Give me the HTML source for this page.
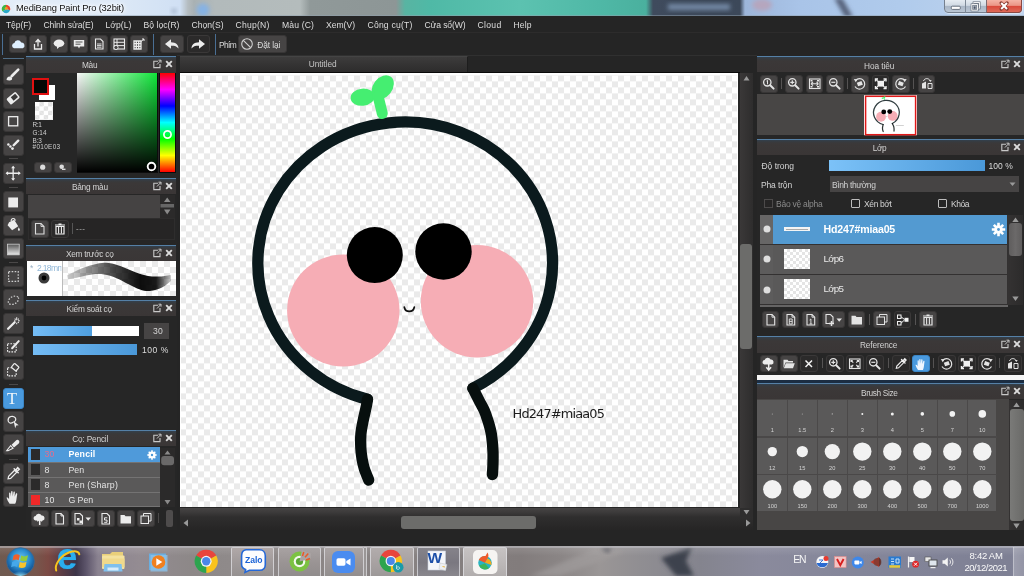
<!DOCTYPE html>
<html lang="vi">
<head>
<meta charset="utf-8">
<title>MediBang Paint Pro (32bit)</title>
<style>
*{box-sizing:border-box;margin:0;padding:0}
html,body{width:1024px;height:576px;overflow:hidden;background:#252525}
body{position:relative;font-family:"Liberation Sans","DejaVu Sans",sans-serif;font-size:8.4px;color:#d8d8d8}
#app{position:absolute;left:-8px;top:-8px;width:1040px;height:592px;overflow:hidden;background:#252525;filter:blur(0.4px)}
#in{position:absolute;left:8px;top:8px;width:1024px;height:576px}
#app div,#app span,#app svg{position:absolute}
.t{white-space:nowrap;line-height:1.2;display:block;opacity:.999}
.b{background:#464444;border:1px solid #383636;border-radius:3px}
.bd{background:#2b2a2a;border:1px solid #3a3838;border-radius:3px}
.ba{background:#4a9ade;border:1px solid #3b86c6;border-radius:3px}
.hd{background:linear-gradient(#33404d 0,#383a3d 2px,#3b3838 4px,#3a3636 100%);border-top:1px solid #5580a6}
.ck{background:repeating-conic-gradient(#eaeaea 0% 25%,#ffffff 0% 50%) 0 0/12px 12px}

</style>
</head>
<body>
<div id="app"><div id="in">
<div style="position:absolute;left:-8px;top:-8px;width:1040px;height:24px;background:linear-gradient(90deg,#e3edf8 8px,#dce8f6 128px,#d0e0f4 188px,#b4bcc0 196px,#a9b1b3 202px,#b2babb 223px,#b4bcbc 308px,#909999 318px,#8d9696 404px,#58b4a2 413px,#4fb9a6 438px,#5cc2b0 528px,#4fb8a6 608px,#4ab09e 654px,#3f4b5d 661px,#3c4859 748px,#9db6da 753px,#a9c4e8 808px,#b0cbec 908px,#c0d4ee 1032px)"></div>
<svg style="position:absolute;left:0px;top:0px;" width="1024" height="16" viewBox="0 0 1024 16"><defs><filter id="tb" x="-50%" y="-50%" width="200%" height="200%"><feGaussianBlur stdDeviation="2"/></filter></defs><circle cx="203" cy="10" r="6.5" fill="#86b2e4" filter="url(#tb)"/><circle cx="174" cy="11" r="2.5" fill="#9fb0c8" filter="url(#tb)"/><rect x="668" y="4" width="62" height="6" fill="#7388a4" filter="url(#tb)"/><path d="M834 -2 L842 -2 L853 17 L845 17 Z" fill="#56627a" filter="url(#tb)"/><ellipse cx="762" cy="5" rx="10" ry="6" fill="#b6a6be" filter="url(#tb)"/><rect x="0" y="15" width="1024" height="1" fill="#8fa0ae" opacity=".5"/></svg>
<svg style="position:absolute;left:0.5px;top:3.5px;" width="10" height="10" viewBox="0 0 10 10"><circle cx="5" cy="5" r="4.6" fill="#fff"/><path d="M5 5 L5 0.7 A4.3 4.3 0 0 1 9.1 6.3 Z" fill="#e8432e"/><path d="M5 5 L9.1 6.3 A4.3 4.3 0 0 1 1.6 7.6 Z" fill="#2aa8c9"/><path d="M5 5 L1.6 7.6 A4.3 4.3 0 0 1 5 0.7 Z" fill="#3bb54a"/><circle cx="5.3" cy="4.2" r="1.5" fill="#f39a1e"/></svg>
<span class="t" style="left:16px;top:2.6px;font-size:9.3px;color:#101010;letter-spacing:-0.139px;text-shadow:0 0 3px #fff,0 0 5px #fff,0 0 7px #fff;">MediBang Paint Pro (32bit)</span>
<div style="position:absolute;left:943.5px;top:-1px;width:79px;height:15px;border-radius:0 0 5px 5px;background:rgba(255,255,255,.45)"></div>
<div style="position:absolute;left:944.3px;top:-1px;width:77.5px;height:14.3px;border-radius:0 0 4px 4px;border:1px solid #75808e;background:linear-gradient(#e6ecf2 0,#d0d9e3 45%,#aab7c6 52%,#bac6d4 100%)"></div>
<div style="position:absolute;left:965.3px;top:0px;width:1px;height:13px;background:#7c8896"></div>
<div style="position:absolute;left:986px;top:-1px;width:35.8px;height:14.3px;border-radius:0 0 4px 0;border:1px solid #8a4a44;border-left-color:#7c6a70;background:linear-gradient(#f4b4a6 0,#eb9686 45%,#d9493a 52%,#de6a58 100%)"></div>
<svg style="position:absolute;left:949px;top:5px;" width="13" height="6" viewBox="0 0 13 6"><rect x="2.3" y="1.2" width="9" height="3.2" rx="1" fill="#fff" stroke="#5a6472" stroke-width="0.9"/></svg>
<svg style="position:absolute;left:969px;top:0.5px;" width="13" height="11" viewBox="0 0 13 11"><rect x="4.8" y="1.6" width="5.6" height="5.6" fill="none" stroke="#5a6472" stroke-width="2.2"/><rect x="4.8" y="1.6" width="5.6" height="5.6" fill="none" stroke="#fff" stroke-width="1"/><rect x="2.8" y="3.6" width="5.6" height="5.6" fill="#c4ceda" stroke="#5a6472" stroke-width="2.2"/><rect x="2.8" y="3.6" width="5.6" height="5.6" fill="none" stroke="#fff" stroke-width="1"/><rect x="4.6" y="5.4" width="2" height="2.4" fill="#4a5260"/></svg>
<svg style="position:absolute;left:997px;top:1px;" width="14" height="10" viewBox="0 0 14 10"><path d="M4.2 2 L10 8 M10 2 L4.2 8" stroke="#8a3a30" stroke-width="3.3" stroke-linecap="round"/><path d="M4.2 2 L10 8 M10 2 L4.2 8" stroke="#fff" stroke-width="2" stroke-linecap="butt"/></svg>
<div style="position:absolute;left:0px;top:16px;width:1024px;height:16px;background:#252525"></div>
<span class="t" style="left:6px;top:20.1px;font-size:8.6px;color:#dedede;letter-spacing:-0.130px;">Tệp(F)</span>
<span class="t" style="left:43.5px;top:20.1px;font-size:8.6px;color:#dedede;letter-spacing:-0.095px;">Chỉnh sửa(E)</span>
<span class="t" style="left:105.5px;top:20.1px;font-size:8.6px;color:#dedede;letter-spacing:0.049px;">Lớp(L)</span>
<span class="t" style="left:143.5px;top:20.1px;font-size:8.6px;color:#dedede;letter-spacing:0.019px;">Bộ lọc(R)</span>
<span class="t" style="left:191.5px;top:20.1px;font-size:8.6px;color:#dedede;letter-spacing:0.000px;">Chọn(S)</span>
<span class="t" style="left:235.5px;top:20.1px;font-size:8.6px;color:#dedede;letter-spacing:0.217px;">Chụp(N)</span>
<span class="t" style="left:282px;top:20.1px;font-size:8.6px;color:#dedede;letter-spacing:0.136px;">Màu (C)</span>
<span class="t" style="left:326px;top:20.1px;font-size:8.6px;color:#dedede;letter-spacing:-0.023px;">Xem(V)</span>
<span class="t" style="left:367.5px;top:20.1px;font-size:8.6px;color:#dedede;letter-spacing:0.202px;">Công cụ(T)</span>
<span class="t" style="left:424.5px;top:20.1px;font-size:8.6px;color:#dedede;letter-spacing:-0.116px;">Cửa sổ(W)</span>
<span class="t" style="left:477.5px;top:20.1px;font-size:8.6px;color:#dedede;letter-spacing:0.306px;">Cloud</span>
<span class="t" style="left:513.5px;top:20.1px;font-size:8.6px;color:#dedede;letter-spacing:0.078px;">Help</span>
<div style="position:absolute;left:0px;top:32px;width:1024px;height:24px;background:#252525;border-top:1px solid #2d2c2c"></div>
<div style="position:absolute;left:2px;top:34px;width:1px;height:21px;background:#4a6f94"></div>
<div style="position:absolute;left:153px;top:34px;width:1px;height:21px;background:#4a6f94"></div>
<div style="position:absolute;left:215px;top:34px;width:1px;height:21px;background:#4a6f94"></div>
<div class="b" style="position:absolute;left:9px;top:35px;width:18px;height:18px;"></div>
<svg style="position:absolute;left:10px;top:36px;" width="16" height="16" viewBox="0 0 16 16"><path d="M4 12.2 a2.6 2.6 0 0 1 0.4 -5.1 a3.6 3.6 0 0 1 6.8 -0.6 a3 3 0 0 1 1.6 5.7 Z" fill="#dff0ff"/></svg>
<div class="b" style="position:absolute;left:29px;top:35px;width:18px;height:18px;"></div>
<svg style="position:absolute;left:30px;top:36px;" width="16" height="16" viewBox="0 0 16 16"><path d="M4.5 8 V13 H11.5 V8" fill="none" stroke="#ececec" stroke-width="1.3"/><path d="M8 10.5 V4.5 M5.6 6.3 L8 3.6 L10.4 6.3" fill="none" stroke="#ececec" stroke-width="1.3"/></svg>
<div class="b" style="position:absolute;left:49.5px;top:35px;width:18px;height:18px;"></div>
<svg style="position:absolute;left:50.5px;top:36px;" width="16" height="16" viewBox="0 0 16 16"><ellipse cx="8" cy="7.3" rx="5.3" ry="3.7" fill="#ececec"/><path d="M6 10 L6 13 L9 10.5 Z" fill="#ececec"/></svg>
<div class="b" style="position:absolute;left:70px;top:35px;width:18px;height:18px;"></div>
<svg style="position:absolute;left:71px;top:36px;" width="16" height="16" viewBox="0 0 16 16"><path d="M2.8 4 H13.2 V10.5 H9 L8 12.5 L7 10.5 H2.8 Z" fill="#ececec"/><path d="M4.5 6 H11.5 M4.5 8.2 H9.5" stroke="#555" stroke-width="1"/></svg>
<div class="b" style="position:absolute;left:90px;top:35px;width:18px;height:18px;"></div>
<svg style="position:absolute;left:91px;top:36px;" width="16" height="16" viewBox="0 0 16 16"><path d="M4.5 3 H9.5 L12 5.5 V13 H4.5 Z" fill="none" stroke="#ececec" stroke-width="1.1"/><path d="M6 8 H10.5 M6 9.6 H10.5 M6 11.2 H10.5" stroke="#ececec" stroke-width="0.9"/></svg>
<div class="b" style="position:absolute;left:110px;top:35px;width:18px;height:18px;"></div>
<svg style="position:absolute;left:111px;top:36px;" width="16" height="16" viewBox="0 0 16 16"><rect x="3" y="3" width="10.5" height="10" fill="none" stroke="#ececec" stroke-width="1.1"/><path d="M3 6.3 H13.5 M3 9.6 H13.5 M6 3 V13" stroke="#ececec" stroke-width="1"/><circle cx="5" cy="11.5" r="2.1" fill="#464444" stroke="#ececec" stroke-width="0.9"/></svg>
<div class="b" style="position:absolute;left:130px;top:35px;width:18px;height:18px;"></div>
<svg style="position:absolute;left:131px;top:36px;" width="16" height="16" viewBox="0 0 16 16"><path d="M3 5 H10 V13 H3 Z M3 7.7 H10 M3 10.3 H10 M5.3 5 V13 M7.7 5 V13" fill="none" stroke="#ececec" stroke-width="1.3"/><path d="M9.5 6 L13 3 M11 3 H13 V5" stroke="#ececec" stroke-width="1" fill="none"/></svg>
<div class="b" style="position:absolute;left:160px;top:35px;width:23.5px;height:18px;"></div>
<svg style="position:absolute;left:163px;top:37px;" width="18" height="14" viewBox="0 0 18 14"><path d="M2 7 L8 2.3 V5.2 C13 5.2 15.5 8 15.5 11.5 C13.5 9 11.5 8.6 8 8.7 V11.7 Z" fill="#ececec"/></svg>
<div class="bd" style="position:absolute;left:186.5px;top:35px;width:23px;height:18px;"></div>
<svg style="position:absolute;left:189px;top:37px;" width="18" height="14" viewBox="0 0 18 14"><path d="M16 7 L10 2.3 V5.2 C5 5.2 2.5 8 2.5 11.5 C4.5 9 6.5 8.6 10 8.7 V11.7 Z" fill="#ececec"/></svg>
<span class="t" style="left:219px;top:40px;font-size:8.4px;color:#dcdcdc;letter-spacing:-0.641px;">Phím</span>
<div class="b" style="position:absolute;left:238px;top:35px;width:48.5px;height:18px;"></div>
<svg style="position:absolute;left:240px;top:37px;" width="14" height="14" viewBox="0 0 14 14"><circle cx="7" cy="7" r="5.3" fill="none" stroke="#d0d0d0" stroke-width="1.1"/><path d="M3.3 3.3 L10.7 10.7" stroke="#d0d0d0" stroke-width="1.1"/></svg>
<span class="t" style="left:257.3px;top:40px;font-size:8.4px;color:#dcdcdc;letter-spacing:-0.107px;">Đặt lại</span>
<div style="position:absolute;left:0px;top:56px;width:26px;height:474px;background:#252525"></div>
<div style="position:absolute;left:3px;top:58px;width:21px;height:1px;background:#5d7f9e;opacity:.8"></div>
<div class="b" style="position:absolute;left:3.3px;top:64.2px;width:20.3px;height:21px;"></div>
<svg style="position:absolute;left:3.3px;top:64.5px;" width="20.3" height="20.5" viewBox="0 0 20 20"><path d="M15 4.5 L8.5 11" stroke="#ececec" stroke-width="2.6" stroke-linecap="round"/><path d="M3.5 14.8 C3.5 11.5 6.5 10.3 8.6 12.2 C10 14.3 7.5 16 3.5 14.8 Z" fill="#ececec"/></svg>
<div class="b" style="position:absolute;left:3.3px;top:87.6px;width:20.3px;height:21px;"></div>
<svg style="position:absolute;left:3.3px;top:87.89999999999999px;" width="20.3" height="20.5" viewBox="0 0 20 20"><g transform="rotate(-40 10 10)"><rect x="4.2" y="6.3" width="11.6" height="7.4" rx="1.3" fill="#ececec"/><rect x="8.8" y="7.8" width="5.6" height="4.4" fill="#3a3939"/></g></svg>
<div class="b" style="position:absolute;left:3.3px;top:111px;width:20.3px;height:21px;"></div>
<svg style="position:absolute;left:3.3px;top:111.3px;" width="20.3" height="20.5" viewBox="0 0 20 20"><rect x="5.5" y="5.5" width="9" height="9" fill="none" stroke="#ececec" stroke-width="1.3"/></svg>
<div class="b" style="position:absolute;left:3.3px;top:134.5px;width:20.3px;height:21px;"></div>
<svg style="position:absolute;left:3.3px;top:134.8px;" width="20.3" height="20.5" viewBox="0 0 20 20"><path d="M15 5.5 L10.5 10" stroke="#ececec" stroke-width="2.4" stroke-linecap="round"/><circle cx="5.3" cy="9.3" r="1.2" fill="#ececec"/><circle cx="7.3" cy="11.3" r="1.2" fill="#ececec"/><circle cx="9.3" cy="13.3" r="1.4" fill="#ececec"/></svg>
<div class="b" style="position:absolute;left:3.3px;top:162.7px;width:20.3px;height:21px;"></div>
<svg style="position:absolute;left:3.3px;top:163.0px;" width="20.3" height="20.5" viewBox="0 0 20 20"><path d="M10 3.5 V16.5 M3.5 10 H16.5" stroke="#ececec" stroke-width="1.3"/><path d="M10 2.5 L12 5 H8 Z M10 17.5 L12 15 H8 Z M2.5 10 L5 8 V12 Z M17.5 10 L15 8 V12 Z" fill="#ececec"/></svg>
<div class="b" style="position:absolute;left:3.3px;top:191.4px;width:20.3px;height:21px;"></div>
<svg style="position:absolute;left:3.3px;top:191.70000000000002px;" width="20.3" height="20.5" viewBox="0 0 20 20"><rect x="5.2" y="5.3" width="9.6" height="9.8" fill="#ececec"/></svg>
<div class="b" style="position:absolute;left:3.3px;top:214.8px;width:20.3px;height:21px;"></div>
<svg style="position:absolute;left:3.3px;top:215.10000000000002px;" width="20.3" height="20.5" viewBox="0 0 20 20"><path d="M6 7 L11 4.5 L15 11 L9 15 L4.5 10 Z" fill="#ececec"/><path d="M8 6 C8 2.5 12 2.5 12 5.5" fill="none" stroke="#ececec" stroke-width="1.1"/><path d="M15.5 12 C17 14 17 15.5 15.7 15.5 C14.3 15.5 14.5 14 15.5 12 Z" fill="#ececec"/></svg>
<div class="b" style="position:absolute;left:3.3px;top:238.4px;width:20.3px;height:21px;"></div>
<svg style="position:absolute;left:3.3px;top:238.70000000000002px;" width="20.3" height="20.5" viewBox="0 0 20 20"><defs><linearGradient id="gq" x1="0" y1="0" x2="0" y2="1"><stop offset="0" stop-color="#555"/><stop offset="1" stop-color="#e8e8e8"/></linearGradient></defs><rect x="4.5" y="5" width="11.5" height="10.5" fill="url(#gq)" stroke="#cfcfcf" stroke-width="0.8"/></svg>
<div class="b" style="position:absolute;left:3.3px;top:266px;width:20.3px;height:21px;"></div>
<svg style="position:absolute;left:3.3px;top:266.3px;" width="20.3" height="20.5" viewBox="0 0 20 20"><rect x="5.5" y="5.5" width="9.5" height="9.5" fill="none" stroke="#cfcfcf" stroke-width="1.2" stroke-dasharray="1.6 1.4"/></svg>
<div class="b" style="position:absolute;left:3.3px;top:289.3px;width:20.3px;height:21px;"></div>
<svg style="position:absolute;left:3.3px;top:289.6px;" width="20.3" height="20.5" viewBox="0 0 20 20"><ellipse cx="10.3" cy="10" rx="5.5" ry="3.6" transform="rotate(-30 10.3 10)" fill="none" stroke="#cfcfcf" stroke-width="1.2" stroke-dasharray="1.5 1.4"/></svg>
<div class="b" style="position:absolute;left:3.3px;top:312.8px;width:20.3px;height:21px;"></div>
<svg style="position:absolute;left:3.3px;top:313.1px;" width="20.3" height="20.5" viewBox="0 0 20 20"><path d="M5 15.5 L11.5 9" stroke="#ececec" stroke-width="2.2" stroke-linecap="round"/><path d="M13.5 4 V7 M13.5 9.5 V11 M11 7.5 H12.3 M14.8 7.5 H16.5 M11.5 5.5 L12.5 6.5 M15.5 5.5 L14.6 6.4 M15.5 9.7 L14.6 8.7" stroke="#ececec" stroke-width="1"/></svg>
<div class="b" style="position:absolute;left:3.3px;top:336px;width:20.3px;height:21px;"></div>
<svg style="position:absolute;left:3.3px;top:336.3px;" width="20.3" height="20.5" viewBox="0 0 20 20"><rect x="4.5" y="7.5" width="8.5" height="8" fill="none" stroke="#ececec" stroke-width="1.1" stroke-dasharray="1.6 1.2"/><path d="M9 12 L15.5 5" stroke="#ececec" stroke-width="2" stroke-linecap="round"/></svg>
<div class="b" style="position:absolute;left:3.3px;top:359.3px;width:20.3px;height:21px;"></div>
<svg style="position:absolute;left:3.3px;top:359.6px;" width="20.3" height="20.5" viewBox="0 0 20 20"><rect x="4.5" y="7.5" width="8.5" height="8" fill="none" stroke="#ececec" stroke-width="1.1" stroke-dasharray="1.6 1.2"/><rect x="9" y="4.5" width="6" height="5" rx="0.8" transform="rotate(40 12 7)" fill="#464444" stroke="#ececec" stroke-width="1.2"/></svg>
<div class="ba" style="position:absolute;left:3.3px;top:388px;width:20.3px;height:21px;"></div>
<span class="t" style="left:7px;top:389.3px;font-size:16.5px;color:#f2f6fa;font-family:'Liberation Serif','DejaVu Serif',serif;letter-spacing:2.406px;">T</span>
<div class="b" style="position:absolute;left:3.3px;top:411px;width:20.3px;height:21px;"></div>
<svg style="position:absolute;left:3.3px;top:411.3px;" width="20.3" height="20.5" viewBox="0 0 20 20"><path d="M5 9 C5 5 10 4 12 6.5 C13.5 8.5 12 10.5 10 11 C8 12.5 5 12 5 9 Z" fill="none" stroke="#ececec" stroke-width="1.2"/><path d="M10.5 10 L15.5 14 L13 14.3 L12 16.8 Z" fill="#ececec"/></svg>
<div class="b" style="position:absolute;left:3.3px;top:434.4px;width:20.3px;height:21px;"></div>
<svg style="position:absolute;left:3.3px;top:434.7px;" width="20.3" height="20.5" viewBox="0 0 20 20"><path d="M8.5 9.5 L12.8 5.2 C13.8 4.2 15.2 4.6 15.8 5.6 C16.4 6.6 16.2 7.6 15.3 8.4 L10.8 12.3 Z" fill="#ececec"/><path d="M7.6 10.4 L9.9 13 L5 15.3 H3.6 Z" fill="none" stroke="#ececec" stroke-width="1"/></svg>
<div class="b" style="position:absolute;left:3.3px;top:463px;width:20.3px;height:21px;"></div>
<svg style="position:absolute;left:3.3px;top:463.3px;" width="20.3" height="20.5" viewBox="0 0 20 20"><path d="M5 15.5 L5.5 13 L11.5 7 L13.5 9 L7.5 15 Z" fill="none" stroke="#ececec" stroke-width="1.2"/><path d="M11 5.5 L15 9.5 M12.5 7 L14.5 4.5 L16 6 L13.8 8.2" stroke="#ececec" stroke-width="1.5" fill="none" stroke-linecap="round"/></svg>
<div class="b" style="position:absolute;left:3.3px;top:486.3px;width:20.3px;height:21px;"></div>
<svg style="position:absolute;left:3.3px;top:486.6px;" width="20.3" height="20.5" viewBox="0 0 20 20"><path d="M6.5 16.5 C5 14.5 4 12.5 3.5 10.5 C4.3 10 5.2 10.5 6 12 L6 6 C6 5 7.4 5 7.4 6 L7.6 9.5 L8 4.6 C8 3.6 9.4 3.6 9.4 4.6 L9.6 9.3 L10.3 5 C10.4 4 11.8 4.2 11.7 5.2 L11.5 9.6 L12.6 6.6 C13 5.7 14.2 6.1 14 7 L13.2 12.5 C13 14.5 12.5 15.5 12 16.5 Z" fill="#ececec"/></svg>
<div style="position:absolute;left:9px;top:158px;width:9px;height:1px;background:#4a4848"></div>
<div style="position:absolute;left:9px;top:187px;width:9px;height:1px;background:#4a4848"></div>
<div style="position:absolute;left:9px;top:262px;width:9px;height:1px;background:#4a4848"></div>
<div style="position:absolute;left:9px;top:383.5px;width:9px;height:1px;background:#4a4848"></div>
<div style="position:absolute;left:9px;top:458.5px;width:9px;height:1px;background:#4a4848"></div>
<div style="position:absolute;left:26px;top:56px;width:151px;height:474px;background:#262626"></div>
<div class="hd" style="position:absolute;left:26px;top:56px;width:150px;height:16.5px;"></div>
<span class="t" style="left:82px;top:61.300000000000004px;font-size:8.3px;color:#d2d2d2;letter-spacing:-0.314px;">Màu</span>
<svg style="position:absolute;left:152px;top:59px;" width="10" height="10" viewBox="0 0 10 10"><path d="M6 2.2 H1.8 V8.6 H8 V5" fill="none" stroke="#c8c8c8" stroke-width="1.1"/><path d="M5 5.5 L8.8 1.5 M6.5 1.2 H9 V3.7" fill="none" stroke="#c8c8c8" stroke-width="1"/></svg>
<svg style="position:absolute;left:165px;top:60px;" width="8" height="8" viewBox="0 0 8 8"><path d="M1.2 1.2 L6.8 6.8 M6.8 1.2 L1.2 6.8" stroke="#dcdcdc" stroke-width="1.9"/></svg>
<div style="position:absolute;left:39px;top:85px;width:15.5px;height:15px;background:#fff"></div>
<div style="position:absolute;left:32px;top:78px;width:16.5px;height:16.5px;background:#050805;border:2px solid #e01010"></div>
<div style="position:absolute;left:35px;top:102px;width:17.5px;height:17.5px;background-color:#fff;background-image:linear-gradient(45deg,#e2e2e2 25%,transparent 25%,transparent 75%,#e2e2e2 75%),linear-gradient(45deg,#e2e2e2 25%,transparent 25%,transparent 75%,#e2e2e2 75%);background-size:8.75px 8.75px;background-position:0 0,4.375px 4.375px"></div>
<span class="t" style="left:32.5px;top:121px;font-size:6.4px;color:#d0d0d0;letter-spacing:-0.318px;">R:1</span>
<span class="t" style="left:32.5px;top:129px;font-size:6.4px;color:#d0d0d0;letter-spacing:0.035px;">G:14</span>
<span class="t" style="left:32.5px;top:136.5px;font-size:6.4px;color:#d0d0d0;letter-spacing:-0.198px;">B:3</span>
<span class="t" style="left:32.5px;top:143.3px;font-size:6.4px;color:#d0d0d0;letter-spacing:0.344px;">#010E03</span>
<div class="b" style="position:absolute;left:34px;top:162px;width:17.5px;height:10.5px;"></div>
<div class="b" style="position:absolute;left:54px;top:162px;width:17.5px;height:10.5px;"></div>
<svg style="position:absolute;left:34px;top:162px;" width="17.5" height="10.5" viewBox="0 0 17.5 10.5"><circle cx="8.7" cy="5.2" r="2.6" fill="#dcdcdc"/></svg>
<svg style="position:absolute;left:54px;top:162px;" width="17.5" height="10.5" viewBox="0 0 17.5 10.5"><circle cx="7.7" cy="4.7" r="2.3" fill="#dcdcdc"/><path d="M8 7.3 H11.5" stroke="#dcdcdc" stroke-width="1.4"/></svg>
<div style="position:absolute;left:76.5px;top:72.5px;width:81px;height:100px;background:#0c0c0c"></div>
<div style="position:absolute;left:77px;top:73px;width:80px;height:99px;background:linear-gradient(to top,#000 0%,rgba(0,0,0,0) 100%),linear-gradient(to right,#f8f8f8 0%,#10e63a 100%)"></div>
<div style="position:absolute;left:159px;top:72.5px;width:16.5px;height:100px;background:#0c0c0c"></div>
<div style="position:absolute;left:159.5px;top:73px;width:15.5px;height:99px;background:linear-gradient(to bottom,#ff0000 0%,#ff00ff 16.6%,#0000ff 33.3%,#00ffff 50%,#00ff00 66.6%,#ffff00 83.3%,#ff0000 100%)"></div>
<svg style="position:absolute;left:161px;top:128px;" width="13" height="13" viewBox="0 0 13 13"><circle cx="6.5" cy="6.5" r="3.6" fill="none" stroke="#fff" stroke-width="1.7"/></svg>
<svg style="position:absolute;left:145px;top:160px;" width="13" height="13" viewBox="0 0 13 13"><circle cx="6.5" cy="6.5" r="3.8" fill="#000" stroke="#fff" stroke-width="1.9"/></svg>
<div class="hd" style="position:absolute;left:26px;top:177.75px;width:150px;height:16.3px;"></div>
<span class="t" style="left:71.9px;top:182.5px;font-size:8.3px;color:#d2d2d2;letter-spacing:-0.229px;">Bảng màu</span>
<svg style="position:absolute;left:152px;top:180.75px;" width="10" height="10" viewBox="0 0 10 10"><path d="M6 2.2 H1.8 V8.6 H8 V5" fill="none" stroke="#c8c8c8" stroke-width="1.1"/><path d="M5 5.5 L8.8 1.5 M6.5 1.2 H9 V3.7" fill="none" stroke="#c8c8c8" stroke-width="1"/></svg>
<svg style="position:absolute;left:165px;top:181.75px;" width="8" height="8" viewBox="0 0 8 8"><path d="M1.2 1.2 L6.8 6.8 M6.8 1.2 L1.2 6.8" stroke="#dcdcdc" stroke-width="1.9"/></svg>
<div style="position:absolute;left:28px;top:195px;width:132px;height:22.5px;background:#454343"></div>
<div style="position:absolute;left:160px;top:195px;width:14.5px;height:22.5px;background:#2b2a2a"></div>
<svg style="position:absolute;left:160px;top:195px;" width="14.5" height="22.5" viewBox="0 0 14.5 22.5"><path d="M4 7 L7.2 2.5 L10.5 7 Z" fill="#8a8a8a"/><rect x="0.5" y="9" width="13.5" height="3.5" fill="#666"/><path d="M4 14.5 L7.2 19.5 L10.5 14.5 Z" fill="#8a8a8a"/></svg>
<div style="position:absolute;left:28px;top:218px;width:147px;height:22px;background:#262525;border:1px solid #2e2d2d"></div>
<div class="b" style="position:absolute;left:31px;top:219.5px;width:17.5px;height:18px;"></div>
<svg style="position:absolute;left:31px;top:220px;" width="17.5" height="17.5" viewBox="0 0 17.5 17.5"><path d="M4.5 3.5 H10 L13 6.5 V14 H4.5 Z" fill="none" stroke="#dcdcdc" stroke-width="1.1"/><path d="M10 3.5 V6.5 H13" fill="none" stroke="#dcdcdc" stroke-width="0.9"/></svg>
<div class="bd" style="position:absolute;left:51px;top:219.5px;width:18px;height:18px;"></div>
<svg style="position:absolute;left:51px;top:220px;" width="18" height="17.5" viewBox="0 0 18 17.5"><path d="M5 6.5 H13 V14 H5 Z" fill="none" stroke="#f0f0f0" stroke-width="1.2"/><path d="M4 5 H14 M7.5 4 H10.5 M7.6 7 V13.5 M10.4 7 V13.5" stroke="#f0f0f0" stroke-width="1.1"/></svg>
<div style="position:absolute;left:72px;top:223px;width:1px;height:11px;background:#555"></div>
<span class="t" style="left:76px;top:223.5px;font-size:8px;color:#bdbdbd;letter-spacing:0.500px;">---</span>
<div class="hd" style="position:absolute;left:26px;top:245.1px;width:150px;height:15.9px;"></div>
<span class="t" style="left:66px;top:250.39999999999998px;font-size:8.3px;color:#d2d2d2;letter-spacing:-0.263px;">Xem trước cọ</span>
<svg style="position:absolute;left:152px;top:248.1px;" width="10" height="10" viewBox="0 0 10 10"><path d="M6 2.2 H1.8 V8.6 H8 V5" fill="none" stroke="#c8c8c8" stroke-width="1.1"/><path d="M5 5.5 L8.8 1.5 M6.5 1.2 H9 V3.7" fill="none" stroke="#c8c8c8" stroke-width="1"/></svg>
<svg style="position:absolute;left:165px;top:249.1px;" width="8" height="8" viewBox="0 0 8 8"><path d="M1.2 1.2 L6.8 6.8 M6.8 1.2 L1.2 6.8" stroke="#dcdcdc" stroke-width="1.9"/></svg>
<div style="position:absolute;left:27px;top:261px;width:149px;height:35.2px;background:#fff"></div>
<div class="ck" style="position:absolute;left:62px;top:261px;width:114px;height:35.2px;"></div>
<div style="position:absolute;left:61.5px;top:261px;width:1px;height:35.2px;background:#bbb"></div>
<span class="t" style="left:30px;top:262.8px;font-size:8.5px;color:#9ab0c4;">*</span>
<span class="t" style="left:36.9px;top:263px;font-size:8.6px;color:#93b8d8;letter-spacing:-0.674px;clip-path:inset(0 2.5px 0 0);">2.18mm</span>
<svg style="position:absolute;left:36.75px;top:271.4px;" width="14" height="14" viewBox="0 0 14 14"><circle cx="7" cy="7" r="5.5" fill="#3a3a3a"/><circle cx="7" cy="7" r="2.4" fill="#000"/></svg>
<svg style="position:absolute;left:0px;top:0px;" width="1024" height="576" viewBox="0 0 1024 576"><defs><linearGradient id="bs" gradientUnits="userSpaceOnUse" x1="66" y1="0" x2="172" y2="0"><stop offset="0" stop-color="#000" stop-opacity="0.12"/><stop offset="0.2" stop-color="#000" stop-opacity="0.4"/><stop offset="0.45" stop-color="#000" stop-opacity="0.72"/><stop offset="0.7" stop-color="#000" stop-opacity="0.95"/><stop offset="0.85" stop-color="#000" stop-opacity="0.9"/><stop offset="1" stop-color="#000" stop-opacity="0.15"/></linearGradient><filter id="bsf" x="-10%" y="-30%" width="120%" height="160%"><feGaussianBlur stdDeviation="0.7"/></filter></defs><path d="M67.00 275.50 C68.83 274.58 74.17 271.67 78.00 270.00 C81.83 268.33 86.00 266.67 90.00 265.50 C94.00 264.33 98.33 263.33 102.00 263.00 C105.67 262.67 108.33 262.75 112.00 263.50 C115.67 264.25 120.00 266.00 124.00 267.50 C128.00 269.00 132.00 271.08 136.00 272.50 C140.00 273.92 144.00 275.33 148.00 276.00 C152.00 276.67 156.17 276.67 160.00 276.50 C163.83 276.33 169.17 275.25 171.00 275.00 L171.00 281.00 C169.50 282.08 165.50 285.83 162.00 287.50 C158.50 289.17 153.67 290.67 150.00 291.00 C146.33 291.33 143.67 290.67 140.00 289.50 C136.33 288.33 132.00 285.92 128.00 284.00 C124.00 282.08 120.00 279.58 116.00 278.00 C112.00 276.42 108.00 275.08 104.00 274.50 C100.00 273.92 96.00 274.08 92.00 274.50 C88.00 274.92 84.00 276.17 80.00 277.00 C76.00 277.83 70.00 279.08 68.00 279.50 Z" fill="url(#bs)" filter="url(#bsf)"/></svg>
<div class="hd" style="position:absolute;left:26px;top:300.1px;width:150px;height:15.8px;"></div>
<span class="t" style="left:66.6px;top:304.7px;font-size:8.3px;color:#d2d2d2;letter-spacing:-0.222px;">Kiểm soát cọ</span>
<svg style="position:absolute;left:152px;top:303.1px;" width="10" height="10" viewBox="0 0 10 10"><path d="M6 2.2 H1.8 V8.6 H8 V5" fill="none" stroke="#c8c8c8" stroke-width="1.1"/><path d="M5 5.5 L8.8 1.5 M6.5 1.2 H9 V3.7" fill="none" stroke="#c8c8c8" stroke-width="1"/></svg>
<svg style="position:absolute;left:165px;top:304.1px;" width="8" height="8" viewBox="0 0 8 8"><path d="M1.2 1.2 L6.8 6.8 M6.8 1.2 L1.2 6.8" stroke="#dcdcdc" stroke-width="1.9"/></svg>
<div style="position:absolute;left:33px;top:325.5px;width:105.5px;height:10.5px;background:#fff"></div>
<div style="position:absolute;left:33px;top:325.5px;width:58.5px;height:10.5px;background:linear-gradient(90deg,#74bcf5,#4f9fdf)"></div>
<div style="position:absolute;left:143.5px;top:323px;width:25.5px;height:15.5px;background:#464444"></div>
<span class="t" style="left:153px;top:325.5px;font-size:8.6px;color:#d6d6d6;letter-spacing:0.219px;">30</span>
<div style="position:absolute;left:33px;top:344px;width:104px;height:11px;background:linear-gradient(90deg,#74bcf5,#4a98d8)"></div>
<span class="t" style="left:142px;top:344.5px;font-size:8.6px;color:#dcdcdc;letter-spacing:0.525px;">100 %</span>
<div class="hd" style="position:absolute;left:26px;top:429.8px;width:150px;height:16.6px;"></div>
<span class="t" style="left:72.2px;top:434.7px;font-size:8.3px;color:#d2d2d2;letter-spacing:-0.183px;">Cọ: Pencil</span>
<svg style="position:absolute;left:152px;top:432.8px;" width="10" height="10" viewBox="0 0 10 10"><path d="M6 2.2 H1.8 V8.6 H8 V5" fill="none" stroke="#c8c8c8" stroke-width="1.1"/><path d="M5 5.5 L8.8 1.5 M6.5 1.2 H9 V3.7" fill="none" stroke="#c8c8c8" stroke-width="1"/></svg>
<svg style="position:absolute;left:165px;top:433.8px;" width="8" height="8" viewBox="0 0 8 8"><path d="M1.2 1.2 L6.8 6.8 M6.8 1.2 L1.2 6.8" stroke="#dcdcdc" stroke-width="1.9"/></svg>
<div style="position:absolute;left:28px;top:447px;width:131.5px;height:15px;background:#4f9ada"></div>
<div style="position:absolute;left:30.5px;top:449px;width:9.5px;height:10.5px;background:#2b2a2a"></div>
<span class="t" style="left:44.5px;top:449.3px;font-size:8.8px;color:#e26d8e;letter-spacing:0.102px;">30</span>
<span class="t" style="left:68.5px;top:449.3px;font-size:8.8px;color:#ffffff;font-weight:bold;letter-spacing:0.180px;">Pencil</span>
<div style="position:absolute;left:28px;top:462.4px;width:131.5px;height:14.6px;background:#5a5959"></div>
<div style="position:absolute;left:28px;top:462.0px;width:131.5px;height:0.9px;background:#747373"></div>
<div style="position:absolute;left:30.5px;top:464.4px;width:9.5px;height:10.5px;background:#2b2a2a"></div>
<span class="t" style="left:44.5px;top:464.7px;font-size:8.8px;color:#e4e4e4;letter-spacing:0.094px;">8</span>
<span class="t" style="left:68.5px;top:464.7px;font-size:8.8px;color:#e4e4e4;letter-spacing:-0.052px;">Pen</span>
<div style="position:absolute;left:28px;top:477.4px;width:131.5px;height:14.8px;background:#5a5959"></div>
<div style="position:absolute;left:28px;top:477.0px;width:131.5px;height:0.9px;background:#747373"></div>
<div style="position:absolute;left:30.5px;top:479.4px;width:9.5px;height:10.5px;background:#2b2a2a"></div>
<span class="t" style="left:44.5px;top:479.7px;font-size:8.8px;color:#e4e4e4;letter-spacing:0.094px;">8</span>
<span class="t" style="left:68.5px;top:479.7px;font-size:8.8px;color:#e4e4e4;letter-spacing:0.188px;">Pen (Sharp)</span>
<div style="position:absolute;left:28px;top:492.6px;width:131.5px;height:13.9px;background:#5a5959"></div>
<div style="position:absolute;left:28px;top:492.20000000000005px;width:131.5px;height:0.9px;background:#747373"></div>
<div style="position:absolute;left:30.5px;top:494.6px;width:9.5px;height:10.5px;background:#f02828"></div>
<span class="t" style="left:44.5px;top:494.90000000000003px;font-size:8.8px;color:#e4e4e4;letter-spacing:0.102px;">10</span>
<span class="t" style="left:68.5px;top:494.90000000000003px;font-size:8.8px;color:#e4e4e4;letter-spacing:-0.091px;">G Pen</span>
<svg style="position:absolute;left:147px;top:450px;" width="10" height="10" viewBox="0 0 10 10"><circle cx="5" cy="5" r="2.6" fill="none" stroke="#fff" stroke-width="2"/><path d="M5 0.3 V9.7 M0.3 5 H9.7 M1.7 1.7 L8.3 8.3 M8.3 1.7 L1.7 8.3" stroke="#fff" stroke-width="1.5"/><circle cx="5" cy="5" r="1.2" fill="#4b97d6"/></svg>
<div style="position:absolute;left:28px;top:506.1px;width:131.5px;height:0.8px;background:#747373"></div>
<div style="position:absolute;left:160px;top:447.5px;width:15px;height:59px;background:#2b2a2a"></div>
<svg style="position:absolute;left:160px;top:447.5px;" width="15" height="59" viewBox="0 0 15 59"><path d="M4.5 6.5 L7.5 2.5 L10.5 6.5 Z" fill="#8a8a8a"/><rect x="1.2" y="8" width="12.8" height="9.3" rx="3" fill="#6a6969"/><path d="M4.5 52 L7.5 56.5 L10.5 52 Z" fill="#8a8a8a"/></svg>
<div class="b" style="position:absolute;left:31px;top:509.5px;width:17.5px;height:17.5px;"></div>
<svg style="position:absolute;left:31px;top:509.5px;" width="17.5" height="17.5" viewBox="0 0 17.5 17.5"><path d="M4.2 10.5 a2.3 2.3 0 0 1 0.4 -4.5 a3.2 3.2 0 0 1 6 -0.5 a2.6 2.6 0 0 1 1.3 5 Z" fill="#ececec"/><path d="M8.7 15 V9 M6.3 11.3 L8.7 8.6 L11.1 11.3" stroke="#ececec" stroke-width="1.5" fill="none"/></svg>
<div class="b" style="position:absolute;left:51px;top:509.5px;width:17.5px;height:17.5px;"></div>
<svg style="position:absolute;left:51px;top:509.5px;" width="17.5" height="17.5" viewBox="0 0 17.5 17.5"><path d="M5 3.5 H10 L12.5 6 V14 H5 Z" fill="none" stroke="#ececec" stroke-width="1.1"/><path d="M10 3.5 V6 H12.5" fill="none" stroke="#ececec" stroke-width="0.9"/></svg>
<div class="b" style="position:absolute;left:71px;top:509.5px;width:23.5px;height:17.5px;"></div>
<svg style="position:absolute;left:71px;top:509.5px;" width="23.5" height="17.5" viewBox="0 0 23.5 17.5"><path d="M4 3.5 H9 L11.5 6 V14 H4 Z" fill="none" stroke="#ececec" stroke-width="1.1"/><rect x="6" y="8" width="2.5" height="2.5" fill="#ececec"/><rect x="8.5" y="10.5" width="2.5" height="2.5" fill="#ececec"/><path d="M14.5 7.5 H20 L17.2 10.8 Z" fill="#ececec"/></svg>
<div class="b" style="position:absolute;left:97px;top:509.5px;width:17.5px;height:17.5px;"></div>
<svg style="position:absolute;left:97px;top:509.5px;" width="17.5" height="17.5" viewBox="0 0 17.5 17.5"><path d="M5 3.5 H10 L12.5 6 V14 H5 Z" fill="none" stroke="#ececec" stroke-width="1.1"/><path d="M10.3 7.8 H7.5 V10 H10 V12.3 H7.2" fill="none" stroke="#ececec" stroke-width="1"/></svg>
<div class="b" style="position:absolute;left:117px;top:509.5px;width:17.5px;height:17.5px;"></div>
<svg style="position:absolute;left:117px;top:509.5px;" width="17.5" height="17.5" viewBox="0 0 17.5 17.5"><path d="M3.5 5 H7.5 L8.5 6.2 H14 V13.5 H3.5 Z" fill="#ececec"/></svg>
<div class="b" style="position:absolute;left:137px;top:509.5px;width:17.5px;height:17.5px;"></div>
<svg style="position:absolute;left:137px;top:509.5px;" width="17.5" height="17.5" viewBox="0 0 17.5 17.5"><rect x="4" y="6" width="7.5" height="7.5" fill="none" stroke="#ececec" stroke-width="1"/><path d="M6.5 6 V3.5 H14 V11 H11.5" fill="none" stroke="#ececec" stroke-width="1"/></svg>
<div style="position:absolute;left:158px;top:513px;width:1px;height:10px;background:#4a4848"></div>
<div style="position:absolute;left:166px;top:509.5px;width:6.5px;height:17.5px;background:#4e4c4c;border-radius:2px"></div>
<div style="position:absolute;left:177px;top:56px;width:580px;height:474px;background:#252525"></div>
<div style="position:absolute;left:177px;top:55px;width:580px;height:1px;background:#303030"></div>
<div style="position:absolute;left:179.5px;top:56px;width:288.5px;height:16.5px;background:linear-gradient(#3d3c3c,#343333 50%,#2c2b2b);border-top:1px solid #444;border-right:1px solid #1d1d1d"></div>
<span class="t" style="left:308.7px;top:60.1px;font-size:8.3px;color:#c4c4c4;letter-spacing:-0.018px;">Untitled</span>
<div style="position:absolute;left:179.5px;top:72.2px;width:560px;height:1px;background:#0a0a0a"></div>
<div class="ck" style="position:absolute;left:180px;top:73px;width:558.4px;height:434px;background-position:0 2.4px;border-top:2.3px solid #fff;border-left:1.2px solid #fff;border-right:1px solid #fff;background-origin:border-box"></div>
<svg style="position:absolute;left:0px;top:0px;" width="1024" height="576" viewBox="0 0 1024 576">
<ellipse cx="343.3" cy="310.4" rx="56.2" ry="56" fill="#f6adb5"/>
<ellipse cx="477" cy="301.3" rx="56.2" ry="56.3" fill="#f6adb5"/>
<path d="M367.5 399.31 A147.35 141.0 0 1 1 472.9 388.24" fill="none" stroke="#0b1a1d" stroke-width="11.3" stroke-linecap="round"/>
<path d="M367.50 399.31 C367.30 400.51 367.00 403.05 366.30 406.50 C365.60 409.95 364.20 415.42 363.30 420.00 C362.40 424.58 361.32 429.37 360.90 434.00 C360.48 438.63 360.62 443.72 360.80 447.80 C360.98 451.88 361.42 455.03 362.00 458.50 C362.58 461.97 363.18 465.02 364.30 468.60 C365.42 472.18 367.97 478.10 368.70 480.00" fill="none" stroke="#070f0e" stroke-width="11.3" stroke-linecap="round" stroke-linejoin="round"/>
<path d="M472.90 388.24 C474.03 390.48 477.80 397.99 479.70 401.70 C481.60 405.41 482.97 407.45 484.30 410.50 C485.63 413.55 486.70 416.92 487.70 420.00 C488.70 423.08 489.60 426.03 490.30 429.00 C491.00 431.97 491.45 433.97 491.90 437.80 C492.35 441.63 492.83 447.37 493.00 452.00 C493.17 456.63 493.00 461.83 492.90 465.60 C492.80 469.37 492.48 473.10 492.40 474.60" fill="none" stroke="#070f0e" stroke-width="11.3" stroke-linecap="round" stroke-linejoin="round"/>
<circle cx="374.8" cy="255.1" r="28" fill="#000"/>
<circle cx="443.5" cy="251.5" r="28.2" fill="#000"/>
<path d="M404.3 307.2 C405.5 312.8 413 312.8 414.3 307.2" fill="none" stroke="#111" stroke-width="1.7" stroke-linecap="round"/>
<ellipse cx="362.6" cy="97.2" rx="12" ry="8.6" transform="rotate(-6 362.6 97.2)" fill="#45ee71"/>
<ellipse cx="382.7" cy="87.3" rx="13.3" ry="9.6" transform="rotate(-52 382.7 87.3)" fill="#45ee71"/>
<path d="M378 96 C380 104 381.5 110 382.3 113.5" fill="none" stroke="#45ee71" stroke-width="11" stroke-linecap="round"/>
</svg>
<span class="t" style="left:512.6px;top:405.8px;font-size:12.9px;color:#1c1c1c;font-family:'DejaVu Sans','Liberation Sans',sans-serif;letter-spacing:-0.852px;">Hd247#miaa05</span>
<div style="position:absolute;left:739.5px;top:72.5px;width:13px;height:435px;background:linear-gradient(90deg,#3a3838,#2e2d2d)"></div>
<svg style="position:absolute;left:739.5px;top:72.5px;" width="13" height="12" viewBox="0 0 13 12"><path d="M3.5 7.5 L6.5 3 L9.5 7.5 Z" fill="#9a9a9a"/></svg>
<div style="position:absolute;left:740px;top:244px;width:12px;height:105.2px;background:#6c6c6a;border-radius:3px"></div>
<svg style="position:absolute;left:739.5px;top:505px;" width="13" height="12" viewBox="0 0 13 12"><path d="M3.5 4 L6.5 8.5 L9.5 4 Z" fill="#9a9a9a"/></svg>
<div style="position:absolute;left:179.5px;top:507.5px;width:573px;height:23px;background:linear-gradient(#464444 0,#3d3b3b 4px,#2f2e2e 9px,#262525 22px)"></div>
<svg style="position:absolute;left:181px;top:517px;" width="10" height="12" viewBox="0 0 10 12"><path d="M7 2.5 L2.5 6 L7 9.5 Z" fill="#9a9a9a"/></svg>
<svg style="position:absolute;left:743px;top:517px;" width="10" height="12" viewBox="0 0 10 12"><path d="M3 2.5 L7.5 6 L3 9.5 Z" fill="#9a9a9a"/></svg>
<div style="position:absolute;left:400.5px;top:516px;width:135.5px;height:13px;background:#6c6c6a;border-radius:3px"></div>
<div style="position:absolute;left:739.5px;top:507.5px;width:13px;height:9px;background:#2e2d2d"></div>
<svg style="position:absolute;left:739.5px;top:506px;" width="13" height="12" viewBox="0 0 13 12"><path d="M3.5 4 L6.5 8.5 L9.5 4 Z" fill="#9a9a9a"/></svg>
<div style="position:absolute;left:0px;top:530px;width:1024px;height:16.5px;background:#252525"></div>
<div style="position:absolute;left:757px;top:56px;width:267px;height:474px;background:#262626"></div>
<div class="hd" style="position:absolute;left:757px;top:56.2px;width:267px;height:16.3px;"></div>
<span class="t" style="left:864px;top:61.50000000000001px;font-size:8.3px;color:#d2d2d2;letter-spacing:-0.063px;">Hoa tiêu</span>
<svg style="position:absolute;left:1000px;top:59.2px;" width="10" height="10" viewBox="0 0 10 10"><path d="M6 2.2 H1.8 V8.6 H8 V5" fill="none" stroke="#c8c8c8" stroke-width="1.1"/><path d="M5 5.5 L8.8 1.5 M6.5 1.2 H9 V3.7" fill="none" stroke="#c8c8c8" stroke-width="1"/></svg>
<svg style="position:absolute;left:1013px;top:60.2px;" width="8" height="8" viewBox="0 0 8 8"><path d="M1.2 1.2 L6.8 6.8 M6.8 1.2 L1.2 6.8" stroke="#dcdcdc" stroke-width="1.9"/></svg>
<div class="b" style="position:absolute;left:760px;top:75px;width:17.5px;height:17.5px;"></div>
<svg style="position:absolute;left:760px;top:75px;" width="17.5" height="17.5" viewBox="0 0 17.5 17.5"><circle cx="7.3" cy="7.3" r="3.7" fill="none" stroke="#e4e4e4" stroke-width="1.3"/><path d="M10.2 10.2 L13.6 13.6" stroke="#e4e4e4" stroke-width="2" stroke-linecap="round"/><path d="M7.5 5.3 V9.3 M6.5 6 L7.5 5.3" stroke="#e4e4e4" stroke-width="1" fill="none"/></svg>
<div class="b" style="position:absolute;left:785.3px;top:75px;width:17.5px;height:17.5px;"></div>
<svg style="position:absolute;left:785.3px;top:75px;" width="17.5" height="17.5" viewBox="0 0 17.5 17.5"><circle cx="7.3" cy="7.3" r="3.7" fill="none" stroke="#e4e4e4" stroke-width="1.3"/><path d="M10.2 10.2 L13.6 13.6" stroke="#e4e4e4" stroke-width="2" stroke-linecap="round"/><path d="M5.3 7.3 H9.3 M7.3 5.3 V9.3" stroke="#e4e4e4" stroke-width="1.2"/></svg>
<div class="b" style="position:absolute;left:805.7px;top:75px;width:17.5px;height:17.5px;"></div>
<svg style="position:absolute;left:805.7px;top:75px;" width="17.5" height="17.5" viewBox="0 0 17.5 17.5"><rect x="3.5" y="4" width="10.5" height="9.5" fill="none" stroke="#e4e4e4" stroke-width="1.1"/><path d="M5 8.7 H12.5 M5 8.7 L7 6.8 M5 8.7 L7 10.6 M12.5 8.7 L10.5 6.8 M12.5 8.7 L10.5 10.6" stroke="#e4e4e4" stroke-width="1.1" fill="none"/><path d="M4.5 5 H6.5 V6.5 H4.5 Z M11 5 H13 V6.5 H11 Z M4.5 11 H6.5 V12.5 H4.5 Z M11 11 H13 V12.5 H11 Z" fill="#e4e4e4"/></svg>
<div class="b" style="position:absolute;left:826px;top:75px;width:17.5px;height:17.5px;"></div>
<svg style="position:absolute;left:826px;top:75px;" width="17.5" height="17.5" viewBox="0 0 17.5 17.5"><circle cx="7.3" cy="7.3" r="3.7" fill="none" stroke="#e4e4e4" stroke-width="1.3"/><path d="M10.2 10.2 L13.6 13.6" stroke="#e4e4e4" stroke-width="2" stroke-linecap="round"/><path d="M5.3 7.3 H9.3" stroke="#e4e4e4" stroke-width="1.2"/></svg>
<div class="b" style="position:absolute;left:851.3px;top:75px;width:17.5px;height:17.5px;"></div>
<svg style="position:absolute;left:851.3px;top:75px;" width="17.5" height="17.5" viewBox="0 0 17.5 17.5"><path d="M4.6 5.5 A5.2 5.2 0 1 1 4 11.5" fill="none" stroke="#e4e4e4" stroke-width="1.2"/><path d="M2.8 4 L6.5 4.3 L4.8 7.3 Z" fill="#e4e4e4"/><rect x="6.3" y="6.8" width="5" height="3.8" transform="rotate(-20 8.8 8.7)" fill="#e4e4e4"/></svg>
<div class="bd" style="position:absolute;left:871.7px;top:75px;width:17.5px;height:17.5px;"></div>
<svg style="position:absolute;left:871.7px;top:75px;" width="17.5" height="17.5" viewBox="0 0 17.5 17.5"><rect x="5.5" y="5.8" width="6.5" height="5.8" fill="#f2f2f2"/><path d="M3.5 6.5 V4 H6 M11.5 4 H14 V6.5 M14 11 V13.5 H11.5 M6 13.5 H3.5 V11" fill="none" stroke="#f2f2f2" stroke-width="1.4"/><path d="M3.8 4.3 L6 6.3 M13.7 4.3 L11.5 6.3 M13.7 13.2 L11.5 11.2 M3.8 13.2 L6 11.2" stroke="#f2f2f2" stroke-width="1.1"/></svg>
<div class="b" style="position:absolute;left:892px;top:75px;width:17.5px;height:17.5px;"></div>
<svg style="position:absolute;left:892px;top:75px;" width="17.5" height="17.5" viewBox="0 0 17.5 17.5"><path d="M12.9 5.5 A5.2 5.2 0 1 0 13.5 11.5" fill="none" stroke="#e4e4e4" stroke-width="1.2"/><path d="M14.7 4 L11 4.3 L12.7 7.3 Z" fill="#e4e4e4"/><rect x="6.3" y="6.8" width="5" height="3.8" transform="rotate(20 8.8 8.7)" fill="#e4e4e4"/></svg>
<div class="b" style="position:absolute;left:917.5px;top:75px;width:17.5px;height:17.5px;"></div>
<svg style="position:absolute;left:917.5px;top:75px;" width="17.5" height="17.5" viewBox="0 0 17.5 17.5"><path d="M4 13.5 V8.5 L8 6.5 V13.5 Z" fill="#e4e4e4"/><path d="M10 13.5 V8.5 H14 V13.5 Z" fill="none" stroke="#e4e4e4" stroke-width="1"/><path d="M5.5 6 C6.5 2.8 11 2.8 12.3 6" fill="none" stroke="#e4e4e4" stroke-width="1"/><path d="M12.3 7 L11 5 L13.8 5.2 Z" fill="#e4e4e4"/></svg>
<div style="position:absolute;left:781.3px;top:78px;width:1px;height:11px;background:#555353"></div>
<div style="position:absolute;left:847px;top:78px;width:1px;height:11px;background:#555353"></div>
<div style="position:absolute;left:913px;top:78px;width:1px;height:11px;background:#555353"></div>
<div style="position:absolute;left:757px;top:94.3px;width:267px;height:41px;background:#484645"></div>
<svg style="position:absolute;left:0px;top:0px;" width="1024" height="576" viewBox="0 0 1024 576"><rect x="864" y="95.2" width="53" height="40" fill="#fff"/><rect x="865.6" y="96.3" width="50" height="38.4" fill="#fff" stroke="#e01818" stroke-width="1.5"/><g transform="translate(886.4 112.6) scale(0.0873) translate(-405.2 -263)">
<ellipse cx="343.3" cy="310.4" rx="56.2" ry="56" fill="#f6adb5"/>
<ellipse cx="477" cy="301.3" rx="56.2" ry="56.3" fill="#f6adb5"/>
<path d="M367.5 399.31 A147.35 141.0 0 1 1 472.9 388.24" fill="none" stroke="#0b1a1d" stroke-width="14" opacity="0.85" stroke-linecap="round"/>
<path d="M367.50 399.31 C367.30 400.51 367.00 403.05 366.30 406.50 C365.60 409.95 364.20 415.42 363.30 420.00 C362.40 424.58 361.32 429.37 360.90 434.00 C360.48 438.63 360.62 443.72 360.80 447.80 C360.98 451.88 361.42 455.03 362.00 458.50 C362.58 461.97 363.18 465.02 364.30 468.60 C365.42 472.18 367.97 478.10 368.70 480.00" fill="none" stroke="#070f0e" stroke-width="14" opacity="0.85" stroke-linecap="round" stroke-linejoin="round"/>
<path d="M472.90 388.24 C474.03 390.48 477.80 397.99 479.70 401.70 C481.60 405.41 482.97 407.45 484.30 410.50 C485.63 413.55 486.70 416.92 487.70 420.00 C488.70 423.08 489.60 426.03 490.30 429.00 C491.00 431.97 491.45 433.97 491.90 437.80 C492.35 441.63 492.83 447.37 493.00 452.00 C493.17 456.63 493.00 461.83 492.90 465.60 C492.80 469.37 492.48 473.10 492.40 474.60" fill="none" stroke="#070f0e" stroke-width="14" opacity="0.85" stroke-linecap="round" stroke-linejoin="round"/>
<circle cx="374.8" cy="255.1" r="28" fill="#000"/>
<circle cx="443.5" cy="251.5" r="28.2" fill="#000"/>
<path d="M404.3 307.2 C405.5 312.8 413 312.8 414.3 307.2" fill="none" stroke="#111" stroke-width="1.7" stroke-linecap="round"/>
<ellipse cx="362.6" cy="97.2" rx="12" ry="8.6" transform="rotate(-6 362.6 97.2)" fill="#45ee71"/>
<ellipse cx="382.7" cy="87.3" rx="13.3" ry="9.6" transform="rotate(-52 382.7 87.3)" fill="#45ee71"/>
<path d="M378 96 C380 104 381.5 110 382.3 113.5" fill="none" stroke="#45ee71" stroke-width="11" stroke-linecap="round"/>
<rect x="513" y="411" width="92" height="5" fill="#999"/></g></svg>
<div class="hd" style="position:absolute;left:757px;top:138.5px;width:267px;height:16.6px;"></div>
<span class="t" style="left:872.8px;top:144.0px;font-size:8.3px;color:#d2d2d2;letter-spacing:-0.391px;">Lớp</span>
<svg style="position:absolute;left:1000px;top:141.5px;" width="10" height="10" viewBox="0 0 10 10"><path d="M6 2.2 H1.8 V8.6 H8 V5" fill="none" stroke="#c8c8c8" stroke-width="1.1"/><path d="M5 5.5 L8.8 1.5 M6.5 1.2 H9 V3.7" fill="none" stroke="#c8c8c8" stroke-width="1"/></svg>
<svg style="position:absolute;left:1013px;top:142.5px;" width="8" height="8" viewBox="0 0 8 8"><path d="M1.2 1.2 L6.8 6.8 M6.8 1.2 L1.2 6.8" stroke="#dcdcdc" stroke-width="1.9"/></svg>
<span class="t" style="left:761.5px;top:160.7px;font-size:8.5px;color:#d4d4d4;letter-spacing:-0.014px;">Độ trong</span>
<div style="position:absolute;left:828.5px;top:159.5px;width:156px;height:11.3px;background:linear-gradient(90deg,#7cc2f8,#4a98d8)"></div>
<span class="t" style="left:988.5px;top:160.7px;font-size:8.5px;color:#dcdcdc;letter-spacing:0.078px;">100 %</span>
<span class="t" style="left:761px;top:179.7px;font-size:8.5px;color:#d4d4d4;letter-spacing:-0.143px;">Pha trộn</span>
<div style="position:absolute;left:829.8px;top:176px;width:189.5px;height:16px;background:#464444"></div>
<span class="t" style="left:832px;top:179.7px;font-size:8.5px;color:#d0d0d0;letter-spacing:-0.378px;">Bình thường</span>
<svg style="position:absolute;left:1008px;top:181px;" width="9" height="7" viewBox="0 0 9 7"><path d="M1.5 1.5 H7.5 L4.5 5 Z" fill="#9a9a9a"/></svg>
<div style="position:absolute;left:764.3px;top:199.3px;width:8.5px;height:9px;border:1px solid #4c4a4a;background:#262525"></div>
<span class="t" style="left:776px;top:198.8px;font-size:8.5px;color:#8a8a8a;letter-spacing:-0.260px;">Bảo vệ alpha</span>
<div style="position:absolute;left:851px;top:199.3px;width:9px;height:9px;border:1.2px solid #bdbdbd;background:#252525;border-radius:1px"></div>
<span class="t" style="left:864px;top:198.8px;font-size:8.5px;color:#d4d4d4;letter-spacing:-0.379px;">Xén bớt</span>
<div style="position:absolute;left:938px;top:199.3px;width:9px;height:9px;border:1.2px solid #bdbdbd;background:#252525;border-radius:1px"></div>
<span class="t" style="left:951px;top:198.8px;font-size:8.5px;color:#d4d4d4;letter-spacing:-0.465px;">Khóa</span>
<div style="position:absolute;left:759.5px;top:214.5px;width:248px;height:90px;background:#333131"></div>
<div style="position:absolute;left:759.5px;top:214.7px;width:13.7px;height:29px;background:#676666"></div>
<div style="position:absolute;left:773.2px;top:214.7px;width:234px;height:29px;background:#539ad1"></div>
<svg style="position:absolute;left:761.5px;top:224.2px;" width="10" height="10" viewBox="0 0 10 10"><circle cx="5" cy="5" r="3.5" fill="#dedede"/></svg>
<div style="position:absolute;left:784.4px;top:227px;width:25.6px;height:4.4px;background:#f4f4f4"></div>
<div style="position:absolute;left:786px;top:228.5px;width:22px;height:1.4px;background:#8a8a8a;opacity:.7"></div>
<span class="t" style="left:823.6px;top:222.5px;font-size:10.6px;color:#fff;font-weight:bold;letter-spacing:-0.177px;">Hd247#miaa05</span>
<div style="position:absolute;left:759.5px;top:244.7px;width:13.7px;height:29px;background:#5d5c5c"></div>
<div style="position:absolute;left:773.2px;top:244.7px;width:234px;height:29px;background:#5a5959"></div>
<svg style="position:absolute;left:761.5px;top:254.2px;" width="10" height="10" viewBox="0 0 10 10"><circle cx="5" cy="5" r="3.5" fill="#dedede"/></svg>
<div style="position:absolute;left:784.4px;top:249.2px;width:26px;height:19.7px;background-color:#fff;background-image:linear-gradient(45deg,#e4e4e4 25%,transparent 25%,transparent 75%,#e4e4e4 75%),linear-gradient(45deg,#e4e4e4 25%,transparent 25%,transparent 75%,#e4e4e4 75%);background-size:6px 6px;background-position:0 0,3px 3px"></div>
<span class="t" style="left:823.6px;top:252.89999999999998px;font-size:9.8px;color:#e8e8e8;letter-spacing:-0.820px;">Lớp6</span>
<div style="position:absolute;left:759.5px;top:274.8px;width:13.7px;height:29.5px;background:#5d5c5c"></div>
<div style="position:absolute;left:773.2px;top:274.8px;width:234px;height:29.5px;background:#5a5959"></div>
<svg style="position:absolute;left:761.5px;top:284.55px;" width="10" height="10" viewBox="0 0 10 10"><circle cx="5" cy="5" r="3.5" fill="#dedede"/></svg>
<div style="position:absolute;left:784.4px;top:279.3px;width:26px;height:19.7px;background-color:#fff;background-image:linear-gradient(45deg,#e4e4e4 25%,transparent 25%,transparent 75%,#e4e4e4 75%),linear-gradient(45deg,#e4e4e4 25%,transparent 25%,transparent 75%,#e4e4e4 75%);background-size:6px 6px;background-position:0 0,3px 3px"></div>
<span class="t" style="left:823.6px;top:283.0px;font-size:9.8px;color:#e8e8e8;letter-spacing:-0.820px;">Lớp5</span>
<svg style="position:absolute;left:990.5px;top:222px;" width="15" height="15" viewBox="0 0 15 15"><path d="M7.5 0.8 V14.2 M0.8 7.5 H14.2 M2.8 2.8 L12.2 12.2 M12.2 2.8 L2.8 12.2" stroke="#fff" stroke-width="2.6"/><circle cx="7.5" cy="7.5" r="4.3" fill="#fff"/><circle cx="7.5" cy="7.5" r="1.4" fill="#539ad1"/></svg>
<div style="position:absolute;left:1007.5px;top:214.5px;width:15px;height:90px;background:linear-gradient(90deg,#343232,#2c2b2b)"></div>
<svg style="position:absolute;left:1007.5px;top:214.5px;" width="15" height="9" viewBox="0 0 15 9"><path d="M4.3 7 L7.5 2.5 L10.7 7 Z" fill="#9a9a9a"/></svg>
<div style="position:absolute;left:1008.5px;top:223.3px;width:13.3px;height:33px;background:linear-gradient(90deg,#5f5d5d,#6b6969 50%,#5f5d5d);border-radius:3px"></div>
<svg style="position:absolute;left:1007.5px;top:294px;" width="15" height="9" viewBox="0 0 15 9"><path d="M4.3 2.5 L7.5 7 L10.7 2.5 Z" fill="#9a9a9a"/></svg>
<div style="position:absolute;left:759.5px;top:304.8px;width:248px;height:2.4px;background:#656464"></div>
<div class="b" style="position:absolute;left:761.5px;top:310.8px;width:17.3px;height:17.2px;"></div>
<svg style="position:absolute;left:761.5px;top:310.8px;" width="17.3" height="17.2" viewBox="0 0 17.3 17.2"><path d="M5 3.5 H10 L12.7 6.2 V14 H5 Z" fill="none" stroke="#e4e4e4" stroke-width="1.1"/><path d="M10 3.5 V6.2 H12.7" fill="none" stroke="#e4e4e4" stroke-width="0.9"/></svg>
<div class="b" style="position:absolute;left:781.8px;top:310.8px;width:17.3px;height:17.2px;"></div>
<svg style="position:absolute;left:781.8px;top:310.8px;" width="17.3" height="17.2" viewBox="0 0 17.3 17.2"><path d="M5 3.5 H10 L12.7 6.2 V14 H5 Z" fill="none" stroke="#e4e4e4" stroke-width="1.1"/><path d="M10 3.5 V6.2 H12.7" fill="none" stroke="#e4e4e4" stroke-width="0.9"/><path d="M7.3 8 H10.2 V13 H7.3 Z M7.3 10.4 H10.2" fill="none" stroke="#e4e4e4" stroke-width="0.9"/></svg>
<div class="b" style="position:absolute;left:802px;top:310.8px;width:17.3px;height:17.2px;"></div>
<svg style="position:absolute;left:802px;top:310.8px;" width="17.3" height="17.2" viewBox="0 0 17.3 17.2"><path d="M5 3.5 H10 L12.7 6.2 V14 H5 Z" fill="none" stroke="#e4e4e4" stroke-width="1.1"/><path d="M10 3.5 V6.2 H12.7" fill="none" stroke="#e4e4e4" stroke-width="0.9"/><path d="M7.6 9 L8.9 8 V13 M7.5 13 H10.3" fill="none" stroke="#e4e4e4" stroke-width="0.9"/></svg>
<div class="b" style="position:absolute;left:822.3px;top:310.8px;width:23px;height:17.2px;"></div>
<svg style="position:absolute;left:822.3px;top:310.8px;" width="23" height="17.2" viewBox="0 0 23 17.2"><path d="M4 3.5 H8.5 L11 6 V12.5 H4 Z" fill="none" stroke="#e4e4e4" stroke-width="1.1"/><path d="M9.5 10 V15 M7 12.5 H12" stroke="#e4e4e4" stroke-width="1.5"/><path d="M14.5 7.5 H20 L17.2 10.8 Z" fill="#e4e4e4"/></svg>
<div class="b" style="position:absolute;left:847.7px;top:310.8px;width:17.3px;height:17.2px;"></div>
<svg style="position:absolute;left:847.7px;top:310.8px;" width="17.3" height="17.2" viewBox="0 0 17.3 17.2"><path d="M3.5 4.8 H7.5 L8.5 6 H14 V13.5 H3.5 Z" fill="#e4e4e4"/></svg>
<div class="b" style="position:absolute;left:873px;top:310.8px;width:17.5px;height:17.2px;"></div>
<svg style="position:absolute;left:873px;top:310.8px;" width="17.5" height="17.2" viewBox="0 0 17.5 17.2"><rect x="4" y="6" width="7.5" height="7.5" fill="none" stroke="#e4e4e4" stroke-width="1"/><path d="M6.5 6 V3.5 H14 V11 H11.5" fill="none" stroke="#e4e4e4" stroke-width="1"/></svg>
<div class="bd" style="position:absolute;left:893.5px;top:310.8px;width:17.5px;height:17.2px;"></div>
<svg style="position:absolute;left:893.5px;top:310.8px;" width="17.5" height="17.2" viewBox="0 0 17.5 17.2"><rect x="3.5" y="4" width="3.5" height="3.5" fill="none" stroke="#f2f2f2" stroke-width="1"/><rect x="3.5" y="10.5" width="3.5" height="3.5" fill="none" stroke="#f2f2f2" stroke-width="1"/><rect x="10.5" y="6.8" width="4" height="4" fill="#f2f2f2"/><path d="M7 5.8 L10.5 8.5 M7 12.2 L10.5 9" stroke="#f2f2f2" stroke-width="1"/></svg>
<div class="b" style="position:absolute;left:919px;top:310.8px;width:17.5px;height:17.2px;"></div>
<svg style="position:absolute;left:919px;top:310.8px;" width="17.5" height="17.2" viewBox="0 0 17.5 17.2"><path d="M5 6.5 H13 V14 H5 Z" fill="none" stroke="#e4e4e4" stroke-width="1.2"/><path d="M4 5 H14 M7.5 4 H10.5 M7.6 7 V13.5 M10.4 7 V13.5" stroke="#e4e4e4" stroke-width="1.1"/></svg>
<div style="position:absolute;left:869px;top:314px;width:1px;height:11px;background:#555353"></div>
<div style="position:absolute;left:914.5px;top:314px;width:1px;height:11px;background:#555353"></div>
<div class="hd" style="position:absolute;left:757px;top:336px;width:267px;height:17px;"></div>
<span class="t" style="left:860px;top:340.84999999999997px;font-size:8.3px;color:#d2d2d2;letter-spacing:-0.120px;">Reference</span>
<svg style="position:absolute;left:1000px;top:339px;" width="10" height="10" viewBox="0 0 10 10"><path d="M6 2.2 H1.8 V8.6 H8 V5" fill="none" stroke="#c8c8c8" stroke-width="1.1"/><path d="M5 5.5 L8.8 1.5 M6.5 1.2 H9 V3.7" fill="none" stroke="#c8c8c8" stroke-width="1"/></svg>
<svg style="position:absolute;left:1013px;top:340px;" width="8" height="8" viewBox="0 0 8 8"><path d="M1.2 1.2 L6.8 6.8 M6.8 1.2 L1.2 6.8" stroke="#dcdcdc" stroke-width="1.9"/></svg>
<div class="b" style="position:absolute;left:760px;top:354.7px;width:17.5px;height:17.3px;"></div>
<svg style="position:absolute;left:760px;top:354.7px;" width="17.5" height="17.3" viewBox="0 0 17.5 17.3"><path d="M4.2 9.5 a2.3 2.3 0 0 1 0.4 -4.5 a3.2 3.2 0 0 1 6 -0.5 a2.6 2.6 0 0 1 1.3 5 Z" fill="#ececec"/><path d="M8.7 8.5 V14.5 M6.3 12.3 L8.7 15 L11.1 12.3" stroke="#ececec" stroke-width="1.5" fill="none"/></svg>
<div class="b" style="position:absolute;left:780.4px;top:354.7px;width:17.5px;height:17.3px;"></div>
<svg style="position:absolute;left:780.4px;top:354.7px;" width="17.5" height="17.3" viewBox="0 0 17.5 17.3"><path d="M3.5 4.8 H7.5 L8.5 6 H13 V7.5 H5.5 L3.5 13 Z" fill="#e4e4e4"/><path d="M5.8 8.3 H14.8 L13 13.3 H3.8 Z" fill="#e4e4e4"/></svg>
<div class="bd" style="position:absolute;left:800.3px;top:354.7px;width:17.5px;height:17.3px;"></div>
<svg style="position:absolute;left:800.3px;top:354.7px;" width="17.5" height="17.3" viewBox="0 0 17.5 17.3"><path d="M5.5 5.5 L12 12 M12 5.5 L5.5 12" stroke="#f4f4f4" stroke-width="1.5"/></svg>
<div class="bd" style="position:absolute;left:826px;top:354.7px;width:17.5px;height:17.3px;"></div>
<svg style="position:absolute;left:826px;top:354.7px;" width="17.5" height="17.3" viewBox="0 0 17.5 17.3"><circle cx="7.3" cy="7.3" r="3.7" fill="none" stroke="#e4e4e4" stroke-width="1.3"/><path d="M10.2 10.2 L13.6 13.6" stroke="#e4e4e4" stroke-width="2" stroke-linecap="round"/><path d="M5.3 7.3 H9.3 M7.3 5.3 V9.3" stroke="#e4e4e4" stroke-width="1.2"/></svg>
<div class="bd" style="position:absolute;left:846px;top:354.7px;width:17.5px;height:17.3px;"></div>
<svg style="position:absolute;left:846px;top:354.7px;" width="17.5" height="17.3" viewBox="0 0 17.5 17.3"><rect x="3.5" y="4" width="10.5" height="9.5" fill="none" stroke="#e4e4e4" stroke-width="1.1"/><path d="M5 5.5 L7.3 7.6 M12.5 5.5 L10.2 7.6 M5 12 L7.3 9.9 M12.5 12 L10.2 9.9" stroke="#e4e4e4" stroke-width="1.1"/><path d="M4.5 5 H6.7 V6 L5.5 7 H4.5 Z M13 5 H10.8 V6 L12 7 H13 Z M4.5 12.5 H6.7 V11.5 L5.5 10.5 H4.5 Z M13 12.5 H10.8 V11.5 L12 10.5 H13 Z" fill="#e4e4e4"/></svg>
<div class="bd" style="position:absolute;left:866.2px;top:354.7px;width:17.5px;height:17.3px;"></div>
<svg style="position:absolute;left:866.2px;top:354.7px;" width="17.5" height="17.3" viewBox="0 0 17.5 17.3"><circle cx="7.3" cy="7.3" r="3.7" fill="none" stroke="#e4e4e4" stroke-width="1.3"/><path d="M10.2 10.2 L13.6 13.6" stroke="#e4e4e4" stroke-width="2" stroke-linecap="round"/><path d="M5.3 7.3 H9.3" stroke="#e4e4e4" stroke-width="1.2"/></svg>
<div class="bd" style="position:absolute;left:892px;top:354.7px;width:17.5px;height:17.3px;"></div>
<svg style="position:absolute;left:892px;top:354.7px;" width="17.5" height="17.3" viewBox="0 0 17.5 17.3"><path d="M4.3 13.3 L4.8 11 L10 5.8 L11.8 7.6 L6.6 12.8 Z" fill="none" stroke="#f0f0f0" stroke-width="1.1"/><path d="M9.5 4.5 L13 8 M11 6 L12.8 3.8 L14 5 L12.2 7" stroke="#f0f0f0" stroke-width="1.4" fill="none" stroke-linecap="round"/></svg>
<div class="ba" style="position:absolute;left:912px;top:354.7px;width:17.5px;height:17.3px;"></div>
<svg style="position:absolute;left:912px;top:354.7px;" width="17.5" height="17.3" viewBox="0 0 17.5 17.3"><path d="M6 15 C4.8 13.3 4 11.6 3.5 10 C4.2 9.5 5 10 5.6 11.2 L5.6 5.8 C5.6 5 6.8 5 6.8 5.8 L7 9 L7.3 4.5 C7.3 3.7 8.5 3.7 8.5 4.5 L8.7 8.8 L9.3 4.8 C9.4 4 10.6 4.2 10.5 5 L10.4 9 L11.3 6.2 C11.6 5.5 12.7 5.8 12.5 6.6 L11.9 11.5 C11.7 13.2 11.3 14 10.9 15 Z" fill="#eef6ff"/></svg>
<div class="bd" style="position:absolute;left:938px;top:354.7px;width:17.5px;height:17.3px;"></div>
<svg style="position:absolute;left:938px;top:354.7px;" width="17.5" height="17.3" viewBox="0 0 17.5 17.3"><path d="M4.6 5.5 A5.2 5.2 0 1 1 4 11.5" fill="none" stroke="#e4e4e4" stroke-width="1.2"/><path d="M2.8 4 L6.5 4.3 L4.8 7.3 Z" fill="#e4e4e4"/><rect x="6.3" y="6.8" width="5" height="3.8" transform="rotate(-20 8.8 8.7)" fill="#e4e4e4"/></svg>
<div class="bd" style="position:absolute;left:958px;top:354.7px;width:17.5px;height:17.3px;"></div>
<svg style="position:absolute;left:958px;top:354.7px;" width="17.5" height="17.3" viewBox="0 0 17.5 17.3"><rect x="5.5" y="5.8" width="6.5" height="5.8" fill="#f2f2f2"/><path d="M3.5 6.5 V4 H6 M11.5 4 H14 V6.5 M14 11 V13.5 H11.5 M6 13.5 H3.5 V11" fill="none" stroke="#f2f2f2" stroke-width="1.4"/><path d="M3.8 4.3 L6 6.3 M13.7 4.3 L11.5 6.3 M13.7 13.2 L11.5 11.2 M3.8 13.2 L6 11.2" stroke="#f2f2f2" stroke-width="1.1"/></svg>
<div class="bd" style="position:absolute;left:978px;top:354.7px;width:17.5px;height:17.3px;"></div>
<svg style="position:absolute;left:978px;top:354.7px;" width="17.5" height="17.3" viewBox="0 0 17.5 17.3"><path d="M12.9 5.5 A5.2 5.2 0 1 0 13.5 11.5" fill="none" stroke="#e4e4e4" stroke-width="1.2"/><path d="M14.7 4 L11 4.3 L12.7 7.3 Z" fill="#e4e4e4"/><rect x="6.3" y="6.8" width="5" height="3.8" transform="rotate(20 8.8 8.7)" fill="#e4e4e4"/></svg>
<div class="bd" style="position:absolute;left:1004px;top:354.7px;width:17.5px;height:17.3px;"></div>
<svg style="position:absolute;left:1004px;top:354.7px;" width="17.5" height="17.3" viewBox="0 0 17.5 17.3"><path d="M4 13.5 V8.5 L8 6.5 V13.5 Z" fill="#e4e4e4"/><path d="M10 13.5 V8.5 H14 V13.5 Z" fill="none" stroke="#e4e4e4" stroke-width="1"/><path d="M5.5 6 C6.5 2.8 11 2.8 12.3 6" fill="none" stroke="#e4e4e4" stroke-width="1"/><path d="M12.3 7 L11 5 L13.8 5.2 Z" fill="#e4e4e4"/></svg>
<div style="position:absolute;left:821.5px;top:358px;width:1px;height:10px;background:#555353"></div>
<div style="position:absolute;left:887.5px;top:358px;width:1px;height:10px;background:#555353"></div>
<div style="position:absolute;left:933.3px;top:358px;width:1px;height:10px;background:#555353"></div>
<div style="position:absolute;left:999.3px;top:358px;width:1px;height:10px;background:#555353"></div>
<div style="position:absolute;left:757px;top:374.9px;width:267px;height:4.8px;background:#f6f6f6"></div>
<div style="position:absolute;left:757px;top:379.8px;width:267px;height:3.1px;background:#1b2d42"></div>
<div class="hd" style="position:absolute;left:757px;top:382.9px;width:267px;height:16.6px;"></div>
<span class="t" style="left:861px;top:388.49999999999994px;font-size:8.3px;color:#d2d2d2;letter-spacing:-0.362px;">Brush Size</span>
<svg style="position:absolute;left:1000px;top:385.9px;" width="10" height="10" viewBox="0 0 10 10"><path d="M6 2.2 H1.8 V8.6 H8 V5" fill="none" stroke="#c8c8c8" stroke-width="1.1"/><path d="M5 5.5 L8.8 1.5 M6.5 1.2 H9 V3.7" fill="none" stroke="#c8c8c8" stroke-width="1"/></svg>
<svg style="position:absolute;left:1013px;top:386.9px;" width="8" height="8" viewBox="0 0 8 8"><path d="M1.2 1.2 L6.8 6.8 M6.8 1.2 L1.2 6.8" stroke="#dcdcdc" stroke-width="1.9"/></svg>
<div style="position:absolute;left:757px;top:399.4px;width:252px;height:130.6px;background:#484645"></div>
<div style="position:absolute;left:757.3px;top:399.5px;width:239px;height:111.3px;background:#5a5959"></div>
<div style="position:absolute;left:786.5px;top:399.5px;width:1.5px;height:111.3px;background:#4b4949"></div>
<div style="position:absolute;left:816.5px;top:399.5px;width:1.5px;height:111.3px;background:#4b4949"></div>
<div style="position:absolute;left:846.5px;top:399.5px;width:1.5px;height:111.3px;background:#4b4949"></div>
<div style="position:absolute;left:876.5px;top:399.5px;width:1.5px;height:111.3px;background:#4b4949"></div>
<div style="position:absolute;left:906.5px;top:399.5px;width:1.5px;height:111.3px;background:#4b4949"></div>
<div style="position:absolute;left:936.5px;top:399.5px;width:1.5px;height:111.3px;background:#4b4949"></div>
<div style="position:absolute;left:966.5px;top:399.5px;width:1.5px;height:111.3px;background:#4b4949"></div>
<div style="position:absolute;left:757.3px;top:436.3px;width:240px;height:1.3px;background:#4a4848"></div>
<div style="position:absolute;left:757.3px;top:473.8px;width:240px;height:1.3px;background:#4a4848"></div>
<span class="t" style="left:770.7px;top:427.3px;font-size:5.7px;color:#d4d4d4;letter-spacing:0.028px;">1</span>
<span class="t" style="left:798.2px;top:427.3px;font-size:5.7px;color:#d4d4d4;letter-spacing:0.093px;">1.5</span>
<span class="t" style="left:830.7px;top:427.3px;font-size:5.7px;color:#d4d4d4;letter-spacing:0.028px;">2</span>
<span class="t" style="left:860.7px;top:427.3px;font-size:5.7px;color:#d4d4d4;letter-spacing:0.028px;">3</span>
<span class="t" style="left:890.7px;top:427.3px;font-size:5.7px;color:#d4d4d4;letter-spacing:0.028px;">4</span>
<span class="t" style="left:920.7px;top:427.3px;font-size:5.7px;color:#d4d4d4;letter-spacing:0.028px;">5</span>
<span class="t" style="left:950.7px;top:427.3px;font-size:5.7px;color:#d4d4d4;letter-spacing:0.028px;">7</span>
<span class="t" style="left:979.1px;top:427.3px;font-size:5.7px;color:#d4d4d4;letter-spacing:0.036px;">10</span>
<span class="t" style="left:769.1px;top:464.9px;font-size:5.7px;color:#d4d4d4;letter-spacing:0.036px;">12</span>
<span class="t" style="left:799.1px;top:464.9px;font-size:5.7px;color:#d4d4d4;letter-spacing:0.036px;">15</span>
<span class="t" style="left:829.1px;top:464.9px;font-size:5.7px;color:#d4d4d4;letter-spacing:0.036px;">20</span>
<span class="t" style="left:859.1px;top:464.9px;font-size:5.7px;color:#d4d4d4;letter-spacing:0.036px;">25</span>
<span class="t" style="left:889.1px;top:464.9px;font-size:5.7px;color:#d4d4d4;letter-spacing:0.036px;">30</span>
<span class="t" style="left:919.1px;top:464.9px;font-size:5.7px;color:#d4d4d4;letter-spacing:0.036px;">40</span>
<span class="t" style="left:949.1px;top:464.9px;font-size:5.7px;color:#d4d4d4;letter-spacing:0.036px;">50</span>
<span class="t" style="left:979.1px;top:464.9px;font-size:5.7px;color:#d4d4d4;letter-spacing:0.036px;">70</span>
<span class="t" style="left:767.5px;top:502.5px;font-size:5.7px;color:#d4d4d4;letter-spacing:0.033px;">100</span>
<span class="t" style="left:797.5px;top:502.5px;font-size:5.7px;color:#d4d4d4;letter-spacing:0.033px;">150</span>
<span class="t" style="left:827.5px;top:502.5px;font-size:5.7px;color:#d4d4d4;letter-spacing:0.033px;">200</span>
<span class="t" style="left:857.5px;top:502.5px;font-size:5.7px;color:#d4d4d4;letter-spacing:0.033px;">300</span>
<span class="t" style="left:887.5px;top:502.5px;font-size:5.7px;color:#d4d4d4;letter-spacing:0.033px;">400</span>
<span class="t" style="left:917.5px;top:502.5px;font-size:5.7px;color:#d4d4d4;letter-spacing:0.033px;">500</span>
<span class="t" style="left:947.5px;top:502.5px;font-size:5.7px;color:#d4d4d4;letter-spacing:0.033px;">700</span>
<span class="t" style="left:975.9px;top:502.5px;font-size:5.7px;color:#d4d4d4;letter-spacing:0.036px;">1000</span>
<svg style="position:absolute;left:0px;top:0px;" width="1024" height="576" viewBox="0 0 1024 576"><circle cx="772.30" cy="413.90" r="0.50" fill="#b8b8b8"/><circle cx="802.30" cy="413.90" r="0.50" fill="#b8b8b8"/><circle cx="832.30" cy="413.90" r="0.65" fill="#b8b8b8"/><circle cx="862.30" cy="413.90" r="1.00" fill="#f2f2f2"/><circle cx="892.30" cy="413.90" r="1.50" fill="#f2f2f2"/><circle cx="922.30" cy="413.90" r="1.80" fill="#f2f2f2"/><circle cx="952.30" cy="413.90" r="2.80" fill="#f2f2f2"/><circle cx="982.30" cy="413.90" r="3.80" fill="#f2f2f2"/><circle cx="772.30" cy="451.60" r="4.70" fill="#f2f2f2"/><circle cx="802.30" cy="451.60" r="5.65" fill="#f2f2f2"/><circle cx="832.30" cy="451.60" r="7.65" fill="#f2f2f2"/><circle cx="862.30" cy="451.60" r="9.20" fill="#f2f2f2"/><circle cx="892.30" cy="451.60" r="9.20" fill="#f2f2f2"/><circle cx="922.30" cy="451.60" r="9.20" fill="#f2f2f2"/><circle cx="952.30" cy="451.60" r="9.20" fill="#f2f2f2"/><circle cx="982.30" cy="451.60" r="9.20" fill="#f2f2f2"/><circle cx="772.30" cy="489.20" r="9.20" fill="#f2f2f2"/><circle cx="802.30" cy="489.20" r="9.20" fill="#f2f2f2"/><circle cx="832.30" cy="489.20" r="9.20" fill="#f2f2f2"/><circle cx="862.30" cy="489.20" r="9.20" fill="#f2f2f2"/><circle cx="892.30" cy="489.20" r="9.20" fill="#f2f2f2"/><circle cx="922.30" cy="489.20" r="9.20" fill="#f2f2f2"/><circle cx="952.30" cy="489.20" r="9.20" fill="#f2f2f2"/><circle cx="982.30" cy="489.20" r="9.20" fill="#f2f2f2"/></svg>
<div style="position:absolute;left:1008.5px;top:400px;width:15px;height:130px;background:linear-gradient(90deg,#343232,#2c2b2b)"></div>
<svg style="position:absolute;left:1008.5px;top:400px;" width="15" height="10" viewBox="0 0 15 10"><path d="M4.3 7 L7.5 2.5 L10.7 7 Z" fill="#9a9a9a"/></svg>
<div style="position:absolute;left:1010px;top:409px;width:13.5px;height:112px;background:linear-gradient(90deg,#7a7a78,#727270 50%,#6a6a68);border-radius:3px"></div>
<svg style="position:absolute;left:1008.5px;top:521px;" width="15" height="10" viewBox="0 0 15 10"><path d="M4.3 2.5 L7.5 7.5 L10.7 2.5 Z" fill="#9a9a9a"/></svg>
<div style="position:absolute;left:-8px;top:546.4px;width:1040px;height:37.6px;background:linear-gradient(90deg,#6f5a50 8px,#76564c 44px,#7c4a44 56px,#5b3c44 70px,#3c3448 84px,#5c546a 94px,#8a8290 106px,#948c92 148px,#8d8888 198px,#8f8a8a 238px,#827c7c 528px,#8a8585 568px,#9a9696 608px,#908e92 648px,#84848e 708px,#8a8a9c 768px,#84869a 868px,#7e8094 1018px,#8a8c9e 1032px)"></div>
<svg style="position:absolute;left:500px;top:546.4px;" width="300" height="29.6" viewBox="0 0 300 29.6"><defs><filter id="bl" x="-30%" y="-30%" width="160%" height="160%"><feGaussianBlur stdDeviation="2"/></filter></defs><path d="M30 30 L60 30 L125 6 L95 3 Z" fill="#a09c9c" opacity="0.7" filter="url(#bl)"/><path d="M161 12 L192 1 L186 15 L194 30 L176 30 Z" fill="#3e424d" filter="url(#bl)"/><path d="M100 2 L112 2 L108 7 Z" fill="#5a5a62" filter="url(#bl)"/></svg>
<div style="position:absolute;left:0px;top:546.4px;width:1024px;height:1.2px;background:rgba(200,200,205,.55)"></div>
<div style="position:absolute;left:0px;top:547.6px;width:1024px;height:8px;background:linear-gradient(rgba(255,255,255,.10),rgba(255,255,255,0))"></div>
<svg style="position:absolute;left:5px;top:547px;" width="31" height="29" viewBox="0 0 31 29"><defs><radialGradient id="orb" cx="0.5" cy="0.4" r="0.62"><stop offset="0" stop-color="#6cc4f0"/><stop offset="0.5" stop-color="#2d90d2"/><stop offset="0.85" stop-color="#155a9a"/><stop offset="1" stop-color="#1c4a78"/></radialGradient><radialGradient id="orb2" cx="0.5" cy="1" r="0.5"><stop offset="0" stop-color="#8ee6ff" stop-opacity="0.9"/><stop offset="1" stop-color="#8ee6ff" stop-opacity="0"/></radialGradient></defs><circle cx="15.5" cy="14.5" r="13.8" fill="url(#orb)" stroke="#3a6a94" stroke-width="0.8"/><ellipse cx="15.5" cy="24" rx="9" ry="5" fill="url(#orb2)"/><path d="M8.6 8.4 C10.9 7 12.7 7 14.8 8.2 L13.7 13.3 C11.8 12.3 9.8 12.4 7.5 13.6 Z" fill="#f0602a"/><path d="M16.2 8.6 C18.5 9.8 20.6 9.6 23 8.3 L21.9 13.4 C19.7 14.6 17.4 14.7 15.1 13.6 Z" fill="#92cc3c"/><path d="M7.2 15 C9.4 13.8 11.5 13.8 13.4 14.8 L12.3 19.9 C10.3 18.9 8.4 19 6.1 20.2 Z" fill="#46a8ea"/><path d="M14.8 15.1 C17 16.1 19.2 16 21.5 14.8 L20.4 19.9 C18.2 21.1 16 21.2 13.7 20.2 Z" fill="#fac42c"/></svg>
<span class="t" style="left:56.8px;top:537.5px;font-size:37px;color:#2aaeee;font-weight:bold;letter-spacing:0.922px;line-height:1;text-shadow:0 0 1px #1a7ab8;">e</span>
<svg style="position:absolute;left:53px;top:548px;" width="30" height="27" viewBox="0 0 30 27"><path d="M3.2 22.5 C1.2 17 7 8 16.5 4.3 C21.5 2.5 25.8 3.2 26.3 6.3" fill="none" stroke="#f6c31e" stroke-width="2" stroke-linecap="round"/></svg>
<svg style="position:absolute;left:100px;top:550px;" width="26" height="24" viewBox="0 0 26 24"><path d="M2 4 H10 L12 2 H23 V12 H2 Z" fill="#e9cf7a"/><rect x="2" y="5.5" width="22.5" height="13.5" rx="1" fill="#f4e2a0"/><rect x="2" y="8.5" width="22.5" height="8.5" fill="#f0d98c"/><path d="M4.5 14 H21.5 L22.5 21.5 H3.5 Z" fill="#7fc0ee"/><rect x="7.5" y="17.5" width="11" height="3" fill="#d8ecfa"/></svg>
<svg style="position:absolute;left:148px;top:552px;" width="21" height="20" viewBox="0 0 21 20"><rect x="1" y="1.5" width="17" height="16.5" fill="#6aaee0"/><rect x="2.5" y="3" width="17" height="16.5" fill="#8cc2ea" opacity="0.8"/><circle cx="10.5" cy="10" r="6.8" fill="#f08020"/><path d="M8.3 6.2 L14.3 10 L8.3 13.8 Z" fill="#fff"/></svg>
<svg style="position:absolute;left:0px;top:0px;" width="1024" height="576" viewBox="0 0 1024 576"><path d="M206.2 561.3 L196.15 555.50 A11.6 11.6 0 0 1 216.25 555.50 Z" fill="#e8453c"/><path d="M206.2 561.3 L216.25 555.50 A11.6 11.6 0 0 1 206.20 572.90 Z" fill="#f9c31c"/><path d="M206.2 561.3 L206.20 572.90 A11.6 11.6 0 0 1 196.15 555.50 Z" fill="#2da44e"/><circle cx="206.2" cy="561.3" r="5.45" fill="#f4f4f4"/><circle cx="206.2" cy="561.3" r="4.18" fill="#4a86e8"/></svg>
<div style="position:absolute;left:231px;top:546.8px;width:43.4px;height:30px;border:1px solid rgba(225,225,228,.75);border-bottom:none;border-radius:2px 2px 0 0;background:linear-gradient(#b0a8a8,#a09a9a 50%,#949090)"></div>
<div style="position:absolute;left:277.5px;top:546.8px;width:43.4px;height:30px;border:1px solid rgba(225,225,228,.75);border-bottom:none;border-radius:2px 2px 0 0;background:linear-gradient(#a8a2a2,#9a9494 50%,#908c8c)"></div>
<div style="position:absolute;left:364px;top:546.8px;width:3px;height:30px;border:1px solid rgba(225,225,228,.7);border-left:none;background:#9a9696"></div>
<div style="position:absolute;left:323.8px;top:546.8px;width:40.5px;height:30px;border:1px solid rgba(225,225,228,.75);border-bottom:none;border-radius:2px 2px 0 0;background:linear-gradient(#aaa4a4,#9c9696 50%,#928e8e)"></div>
<div style="position:absolute;left:369.8px;top:546.8px;width:44px;height:30px;border:1px solid rgba(225,225,228,.75);border-bottom:none;border-radius:2px 2px 0 0;background:linear-gradient(#b2acac,#a8a2a2 50%,#9c9898)"></div>
<div style="position:absolute;left:416.6px;top:546.8px;width:43.6px;height:30px;border:1px solid rgba(225,225,228,.75);border-bottom:none;border-radius:2px 2px 0 0;background:linear-gradient(#85838a,#7a7880 50%,#8a888e)"></div>
<div style="position:absolute;left:463px;top:546.8px;width:44px;height:30px;border:1px solid rgba(225,225,228,.75);border-bottom:none;border-radius:2px 2px 0 0;background:linear-gradient(#c6c2c2,#bcb8b8 50%,#b0acac)"></div>
<svg style="position:absolute;left:239px;top:548px;" width="30" height="28" viewBox="0 0 30 28"><path d="M7 1.8 H20.5 C24 1.8 26.3 4.3 26.3 7.8 V16.5 C26.3 20 24 22.3 20.5 22.3 H10.5 L6 24.3 L6.6 21.6 C4 20.6 2.6 18.8 2.6 16.5 V7.8 C2.6 4.3 4 2.3 7 1.8 Z" fill="#fdfdfd" stroke="#2468d8" stroke-width="1.6"/></svg>
<span class="t" style="left:245px;top:555px;font-size:8.6px;color:#1a62d6;font-weight:bold;letter-spacing:-0.043px;">Zalo</span>
<svg style="position:absolute;left:288px;top:549px;" width="24" height="24" viewBox="0 0 24 24"><circle cx="11.5" cy="12.5" r="10" fill="#7cc242"/><circle cx="11.5" cy="12.5" r="5.8" fill="#f4f8ee"/><circle cx="11.5" cy="12.5" r="3.6" fill="#5aa832"/><path d="M11.5 12.5 L14 1 L23 4.5 L22.5 10 Z" fill="#aaa4a4"/><path d="M14.5 7 L15.8 3 M17 8.3 L20.3 4.6 M18 11 L22 9.5" stroke="#ea5a28" stroke-width="1.5"/></svg>
<svg style="position:absolute;left:331px;top:549.5px;" width="26" height="24" viewBox="0 0 26 24"><rect x="1" y="1" width="23" height="22" rx="6" fill="#4a8cf0"/><rect x="5.5" y="8.3" width="9" height="7.4" rx="1.6" fill="#fff"/><path d="M15.3 11 L19.5 8.5 V15.5 L15.3 13 Z" fill="#fff"/></svg>
<svg style="position:absolute;left:0px;top:0px;" width="1024" height="576" viewBox="0 0 1024 576"><path d="M390.8 561 L381.10 555.40 A11.2 11.2 0 0 1 400.50 555.40 Z" fill="#e8453c"/><path d="M390.8 561 L400.50 555.40 A11.2 11.2 0 0 1 390.80 572.20 Z" fill="#f9c31c"/><path d="M390.8 561 L390.80 572.20 A11.2 11.2 0 0 1 381.10 555.40 Z" fill="#2da44e"/><circle cx="390.8" cy="561" r="5.26" fill="#f4f4f4"/><circle cx="390.8" cy="561" r="4.03" fill="#4a86e8"/><circle cx="398.2" cy="567.2" r="5.3" fill="#1a9aa8"/><path d="M396.6 565 V569 M396.6 567.5 C398 566.2 400 567 399.6 568.3 C399.2 569.6 397.5 569.6 396.6 568.8" fill="none" stroke="#d0f0f0" stroke-width="0.8"/></svg>
<svg style="position:absolute;left:425px;top:548.5px;" width="26" height="24" viewBox="0 0 26 24"><rect x="3" y="2" width="17.5" height="19" fill="#f4f6fa" stroke="#c8d0dc" stroke-width="0.6"/><path d="M15 14 L22 15.5 L20.5 21.5 L14 20 Z" fill="#eef0f2" stroke="#c0c4c8" stroke-width="0.5"/><path d="M17.5 17.5 L20 18" stroke="#e8b84a" stroke-width="1"/></svg>
<span class="t" style="left:427.5px;top:549px;font-size:15.5px;color:#1c4fa8;font-weight:bold;letter-spacing:0.359px;">W</span>
<svg style="position:absolute;left:472px;top:548.5px;" width="27" height="26" viewBox="0 0 27 26"><rect x="1" y="1" width="24.5" height="24" rx="5" fill="#f6f4f2"/><circle cx="13" cy="13.8" r="6.8" fill="#28b4c4"/><path d="M13 13.8 L6.8 11 A6.8 6.8 0 0 1 13.5 7 L15.5 3.5 C17 6 16.5 8 15.5 9.5 Z" fill="#ee5a2a"/><path d="M13 13.8 L15.5 9.5 A6.8 6.8 0 0 1 19.5 16 Z" fill="#f6a81c"/><path d="M7 16.5 A6.8 6.8 0 0 0 17 19.3 L13 14.5 Z" fill="#3cb45a"/></svg>
<span class="t" style="left:793.2px;top:553.7px;font-size:10.4px;color:#f6f6f6;letter-spacing:-1.219px;">EN</span>
<svg style="position:absolute;left:815px;top:555px;" width="15" height="14" viewBox="0 0 15 14"><circle cx="7.3" cy="7" r="6" fill="#f6f6f8"/><path d="M1.5 8 A6 6 0 0 0 13 8 Z" fill="#2a6ad0"/><circle cx="11" cy="3.4" r="2.5" fill="#e83a30"/><path d="M4 5 H8 L4.5 8.5 H8.5" stroke="#2a6ad0" stroke-width="0.9" fill="none"/></svg>
<svg style="position:absolute;left:834px;top:555.5px;" width="13" height="12" viewBox="0 0 13 12"><rect x="0.5" y="0.5" width="11.6" height="11" fill="#f2c4c4" stroke="#e08a8a" stroke-width="0.6"/><path d="M3 3 L6.3 9.3 L9.6 3" fill="none" stroke="#d81e1e" stroke-width="1.9"/></svg>
<svg style="position:absolute;left:851px;top:555.5px;" width="14" height="13" viewBox="0 0 14 13"><circle cx="6.8" cy="6.5" r="6" fill="#3f88ea"/><rect x="3.4" y="4.6" width="5" height="3.8" rx="0.8" fill="#fff"/><path d="M8.8 6 L10.6 5 V8 L8.8 7 Z" fill="#fff"/></svg>
<svg style="position:absolute;left:868.5px;top:555px;" width="15" height="14" viewBox="0 0 15 14"><path d="M1.5 7 L10 2 V12 Z" fill="#c83a2a"/><path d="M10 2.5 C12.5 4 12.5 10 10 11.5 Z" fill="#7a2a20"/><circle cx="8.5" cy="7" r="4" fill="#5a3a34" opacity="0.55"/></svg>
<svg style="position:absolute;left:887.5px;top:555.5px;" width="14" height="13" viewBox="0 0 14 13"><rect x="0.5" y="0.5" width="12.5" height="11.5" fill="#2a7ad0"/><rect x="1.2" y="9.2" width="11" height="2.6" fill="#e8c83a"/><path d="M3 3 H6 M3 5.5 H6 M8 3 H11 V7 H8 Z M3 8 H6" stroke="#d8ecfa" stroke-width="0.9" fill="none"/></svg>
<svg style="position:absolute;left:906px;top:555px;" width="15" height="14" viewBox="0 0 15 14"><path d="M2.5 1.5 V12.5" stroke="#f0f0f0" stroke-width="1.2"/><path d="M3.3 2 H8.5 V7 H3.3 Z" fill="#f6f6f6"/><circle cx="9.6" cy="9.2" r="3.4" fill="#e02828"/><path d="M8.1 7.7 L11.1 10.7 M11.1 7.7 L8.1 10.7" stroke="#fff" stroke-width="1"/></svg>
<svg style="position:absolute;left:923.5px;top:555px;" width="15" height="14" viewBox="0 0 15 14"><rect x="1" y="2" width="6" height="4.6" fill="#e8e8e8" stroke="#555" stroke-width="0.6"/><rect x="5" y="5" width="8" height="6" fill="#dfe6ee" stroke="#4a4a4a" stroke-width="0.9"/><path d="M6.5 12.6 H11.5" stroke="#eee" stroke-width="1.2"/></svg>
<svg style="position:absolute;left:941px;top:555px;" width="15" height="14" viewBox="0 0 15 14"><path d="M1.5 5.3 H3.7 L6.8 2.5 V11.5 L3.7 8.7 H1.5 Z" fill="#f4f4f4"/><path d="M8.6 4.8 C9.8 6 9.8 8 8.6 9.2 M10.4 3.3 C12.4 5.3 12.4 8.7 10.4 10.7" fill="none" stroke="#f0f0f0" stroke-width="0.9"/></svg>
<span class="t" style="left:969.6px;top:550.3px;font-size:9.5px;color:#fafafa;letter-spacing:-0.266px;">8:42 AM</span>
<span class="t" style="left:964.5px;top:562.3px;font-size:9.5px;color:#fafafa;letter-spacing:-0.505px;">20/12/2021</span>
<div style="position:absolute;left:1012.5px;top:547px;width:11.5px;height:29px;border-left:1px solid rgba(230,230,235,.55);background:linear-gradient(90deg,rgba(255,255,255,.22),rgba(255,255,255,.08))"></div>
</div></div>
</body>
</html>
